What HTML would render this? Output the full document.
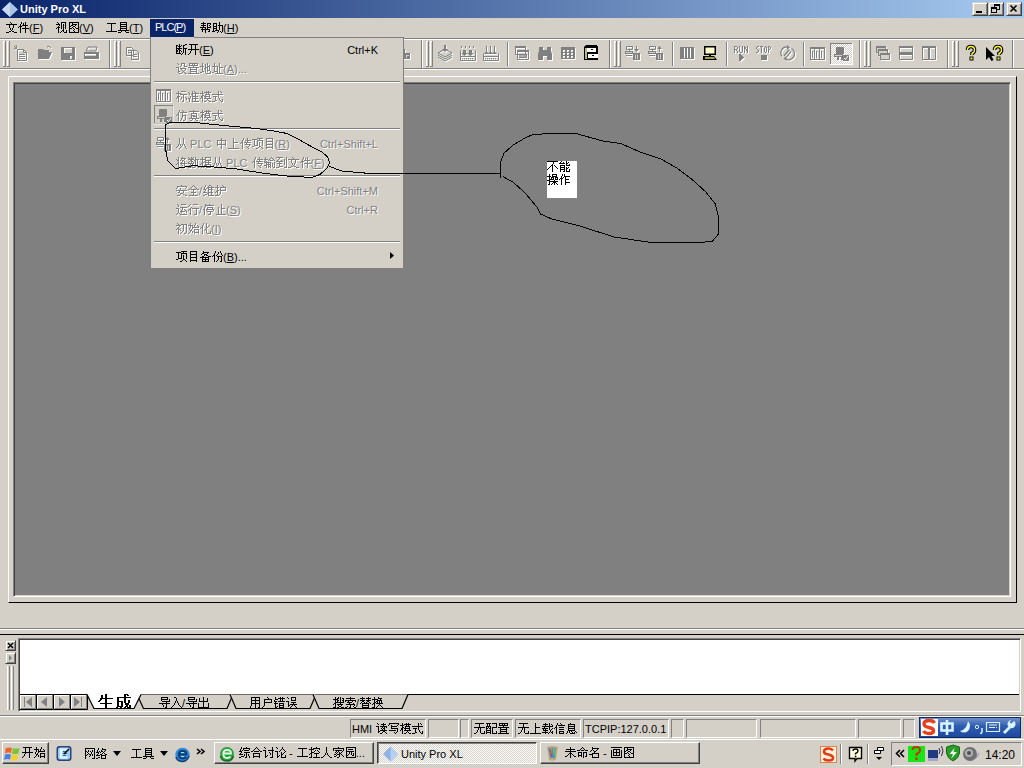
<!DOCTYPE html>
<html><head><meta charset="utf-8">
<style>
*{margin:0;padding:0;box-sizing:border-box}
html,body{width:1024px;height:768px;overflow:hidden;background:#d4d0c8;font-family:"Liberation Sans",sans-serif;font-size:11px;color:#000}
.a{position:absolute}
.t{position:absolute;white-space:nowrap;line-height:12px}
.cn{font-size:11px}
.dis{color:#808080;text-shadow:1px 1px 0 #fff}
.u{text-decoration:underline}
.raised{border-top:1px solid #fff;border-left:1px solid #fff;border-right:1px solid #404040;border-bottom:1px solid #404040;box-shadow:inset -1px -1px 0 #808080}
.raised2{border-top:1px solid #d4d0c8;border-left:1px solid #d4d0c8;border-right:1px solid #404040;border-bottom:1px solid #404040;box-shadow:inset 1px 1px 0 #fff,inset -1px -1px 0 #808080}
.sunk1{border-top:1px solid #808080;border-left:1px solid #808080;border-right:1px solid #fff;border-bottom:1px solid #fff}
.sunk2{border-top:1px solid #808080;border-left:1px solid #808080;border-right:1px solid #fff;border-bottom:1px solid #fff;box-shadow:inset 1px 1px 0 #404040,inset -1px -1px 0 #d4d0c8}
.grip{position:absolute;width:3px;border-left:1px solid #fff;border-right:1px solid #808080}
.sep{position:absolute;width:2px;border-left:1px solid #808080;border-right:1px solid #fff}
.hsep{position:absolute;height:2px;border-top:1px solid #808080;border-bottom:1px solid #fff}
.g{display:inline-block;width:12px;height:12px;vertical-align:-1px;overflow:visible}.gb{display:inline-block;width:17px;height:16px;vertical-align:-2px;overflow:visible}.dis .g{filter:drop-shadow(1px 1px 0 #fff)}</style></head><body><svg width="0" height="0" style="position:absolute"><defs><symbol id="G6587"><path fill="currentColor" d="M5 1h1v1h-1zM6 2h1v1h-1zM1 3h11v1h-11zM4 4h1v1h-1zM8 4h1v1h-1zM4 5h1v1h-1zM8 5h1v1h-1zM4 6h1v1h-1zM8 6h1v1h-1zM5 7h1v1h-1zM7 7h1v1h-1zM5 8h1v1h-1zM7 8h1v1h-1zM6 9h1v1h-1zM4 10h2v1h-2zM7 10h2v1h-2zM1 11h3v1h-3zM9 11h3v1h-3z"/></symbol><symbol id="G4ef6"><path fill="currentColor" d="M4 1h1v1h-1zM8 1h1v1h-1zM4 2h1v1h-1zM6 2h1v1h-1zM8 2h1v1h-1zM3 3h1v1h-1zM6 3h1v1h-1zM8 3h1v1h-1zM3 4h1v1h-1zM5 4h6v1h-6zM2 5h3v1h-3zM8 5h1v1h-1zM1 6h1v1h-1zM3 6h1v1h-1zM8 6h1v1h-1zM3 7h1v1h-1zM5 7h7v1h-7zM3 8h1v1h-1zM8 8h1v1h-1zM3 9h1v1h-1zM8 9h1v1h-1zM3 10h1v1h-1zM8 10h1v1h-1zM3 11h1v1h-1zM8 11h1v1h-1z"/></symbol><symbol id="G89c6"><path fill="currentColor" d="M2 1h1v1h-1zM6 1h5v1h-5zM3 2h1v1h-1zM6 2h1v1h-1zM10 2h1v1h-1zM1 3h4v1h-4zM6 3h1v1h-1zM8 3h1v1h-1zM10 3h1v1h-1zM4 4h1v1h-1zM6 4h1v1h-1zM8 4h1v1h-1zM10 4h1v1h-1zM3 5h1v1h-1zM6 5h1v1h-1zM8 5h1v1h-1zM10 5h1v1h-1zM2 6h3v1h-3zM6 6h1v1h-1zM8 6h1v1h-1zM10 6h1v1h-1zM1 7h1v1h-1zM3 7h1v1h-1zM6 7h1v1h-1zM8 7h1v1h-1zM10 7h1v1h-1zM3 8h1v1h-1zM8 8h1v1h-1zM3 9h1v1h-1zM7 9h2v1h-2zM11 9h1v1h-1zM3 10h1v1h-1zM6 10h1v1h-1zM8 10h1v1h-1zM11 10h1v1h-1zM3 11h1v1h-1zM5 11h1v1h-1zM9 11h3v1h-3z"/></symbol><symbol id="G56fe"><path fill="currentColor" d="M2 1h10v1h-10zM2 2h1v1h-1zM5 2h1v1h-1zM11 2h1v1h-1zM2 3h1v1h-1zM5 3h5v1h-5zM11 3h1v1h-1zM2 4h1v1h-1zM4 4h2v1h-2zM8 4h1v1h-1zM11 4h1v1h-1zM2 5h2v1h-2zM6 5h2v1h-2zM11 5h1v1h-1zM2 6h1v1h-1zM5 6h1v1h-1zM8 6h1v1h-1zM11 6h1v1h-1zM2 7h3v1h-3zM6 7h1v1h-1zM9 7h3v1h-3zM2 8h1v1h-1zM7 8h1v1h-1zM11 8h1v1h-1zM2 9h1v1h-1zM6 9h1v1h-1zM11 9h1v1h-1zM2 10h1v1h-1zM7 10h1v1h-1zM11 10h1v1h-1zM2 11h10v1h-10z"/></symbol><symbol id="G5de5"><path fill="currentColor" d="M2 2h9v1h-9zM6 3h1v1h-1zM6 4h1v1h-1zM6 5h1v1h-1zM6 6h1v1h-1zM6 7h1v1h-1zM6 8h1v1h-1zM6 9h1v1h-1zM1 10h11v1h-11z"/></symbol><symbol id="G5177"><path fill="currentColor" d="M3 1h7v1h-7zM3 2h1v1h-1zM9 2h1v1h-1zM3 3h7v1h-7zM3 4h1v1h-1zM9 4h1v1h-1zM3 5h7v1h-7zM3 6h1v1h-1zM9 6h1v1h-1zM3 7h7v1h-7zM3 8h1v1h-1zM9 8h1v1h-1zM1 9h11v1h-11zM4 10h1v1h-1zM8 10h1v1h-1zM1 11h3v1h-3zM9 11h3v1h-3z"/></symbol><symbol id="G5e2e"><path fill="currentColor" d="M4 1h1v1h-1zM2 2h5v1h-5zM8 2h4v1h-4zM4 3h1v1h-1zM8 3h1v1h-1zM11 3h1v1h-1zM2 4h5v1h-5zM8 4h1v1h-1zM10 4h1v1h-1zM4 5h1v1h-1zM8 5h1v1h-1zM11 5h1v1h-1zM1 6h6v1h-6zM8 6h4v1h-4zM3 7h1v1h-1zM6 7h1v1h-1zM8 7h1v1h-1zM2 8h9v1h-9zM3 9h1v1h-1zM6 9h1v1h-1zM10 9h1v1h-1zM3 10h1v1h-1zM6 10h1v1h-1zM9 10h2v1h-2zM6 11h1v1h-1z"/></symbol><symbol id="G52a9"><path fill="currentColor" d="M8 1h1v1h-1zM2 2h4v1h-4zM8 2h1v1h-1zM2 3h1v1h-1zM5 3h1v1h-1zM8 3h1v1h-1zM2 4h1v1h-1zM5 4h1v1h-1zM7 4h5v1h-5zM2 5h4v1h-4zM8 5h1v1h-1zM11 5h1v1h-1zM2 6h1v1h-1zM5 6h1v1h-1zM8 6h1v1h-1zM11 6h1v1h-1zM2 7h4v1h-4zM8 7h1v1h-1zM11 7h1v1h-1zM2 8h1v1h-1zM5 8h1v1h-1zM8 8h1v1h-1zM11 8h1v1h-1zM2 9h1v1h-1zM4 9h4v1h-4zM11 9h1v1h-1zM1 10h3v1h-3zM7 10h1v1h-1zM9 10h1v1h-1zM11 10h1v1h-1zM6 11h1v1h-1zM10 11h1v1h-1z"/></symbol><symbol id="G65ad"><path fill="currentColor" d="M4 1h1v1h-1zM10 1h2v1h-2zM1 2h2v1h-2zM4 2h1v1h-1zM6 2h1v1h-1zM8 2h2v1h-2zM1 3h1v1h-1zM3 3h3v1h-3zM8 3h1v1h-1zM1 4h1v1h-1zM4 4h1v1h-1zM8 4h1v1h-1zM1 5h6v1h-6zM8 5h4v1h-4zM1 6h1v1h-1zM3 6h2v1h-2zM8 6h1v1h-1zM10 6h1v1h-1zM1 7h2v1h-2zM4 7h2v1h-2zM8 7h1v1h-1zM10 7h1v1h-1zM1 8h2v1h-2zM4 8h1v1h-1zM6 8h1v1h-1zM8 8h1v1h-1zM10 8h1v1h-1zM1 9h1v1h-1zM4 9h1v1h-1zM8 9h1v1h-1zM10 9h1v1h-1zM1 10h5v1h-5zM7 10h1v1h-1zM10 10h1v1h-1zM6 11h1v1h-1zM10 11h1v1h-1z"/></symbol><symbol id="G5f00"><path fill="currentColor" d="M2 1h9v1h-9zM4 2h1v1h-1zM8 2h1v1h-1zM4 3h1v1h-1zM8 3h1v1h-1zM4 4h1v1h-1zM8 4h1v1h-1zM4 5h1v1h-1zM8 5h1v1h-1zM1 6h11v1h-11zM4 7h1v1h-1zM8 7h1v1h-1zM3 8h1v1h-1zM8 8h1v1h-1zM3 9h1v1h-1zM8 9h1v1h-1zM2 10h1v1h-1zM8 10h1v1h-1zM1 11h1v1h-1zM8 11h1v1h-1z"/></symbol><symbol id="G8bbe"><path fill="currentColor" d="M2 1h1v1h-1zM6 1h4v1h-4zM3 2h1v1h-1zM6 2h1v1h-1zM9 2h1v1h-1zM6 3h1v1h-1zM9 3h1v1h-1zM5 4h1v1h-1zM9 4h3v1h-3zM1 5h3v1h-3zM3 6h1v1h-1zM5 6h6v1h-6zM3 7h1v1h-1zM6 7h1v1h-1zM10 7h1v1h-1zM3 8h1v1h-1zM7 8h1v1h-1zM9 8h1v1h-1zM3 9h2v1h-2zM8 9h1v1h-1zM3 10h1v1h-1zM7 10h1v1h-1zM9 10h1v1h-1zM4 11h3v1h-3zM10 11h2v1h-2z"/></symbol><symbol id="G7f6e"><path fill="currentColor" d="M2 1h9v1h-9zM2 2h1v1h-1zM5 2h1v1h-1zM7 2h1v1h-1zM10 2h1v1h-1zM2 3h9v1h-9zM6 4h1v1h-1zM1 5h11v1h-11zM3 6h1v1h-1zM9 6h1v1h-1zM3 7h7v1h-7zM3 8h1v1h-1zM9 8h1v1h-1zM3 9h7v1h-7zM3 10h1v1h-1zM9 10h1v1h-1zM1 11h11v1h-11z"/></symbol><symbol id="G5730"><path fill="currentColor" d="M3 1h1v1h-1zM8 1h1v1h-1zM3 2h1v1h-1zM6 2h1v1h-1zM8 2h1v1h-1zM3 3h1v1h-1zM6 3h1v1h-1zM8 3h1v1h-1zM10 3h1v1h-1zM1 4h4v1h-4zM6 4h1v1h-1zM8 4h3v1h-3zM3 5h1v1h-1zM6 5h3v1h-3zM10 5h1v1h-1zM3 6h1v1h-1zM5 6h2v1h-2zM8 6h1v1h-1zM10 6h1v1h-1zM3 7h1v1h-1zM6 7h1v1h-1zM8 7h1v1h-1zM10 7h1v1h-1zM3 8h1v1h-1zM6 8h1v1h-1zM8 8h3v1h-3zM3 9h2v1h-2zM6 9h1v1h-1zM8 9h1v1h-1zM11 9h1v1h-1zM1 10h2v1h-2zM6 10h1v1h-1zM11 10h1v1h-1zM7 11h5v1h-5z"/></symbol><symbol id="G5740"><path fill="currentColor" d="M3 1h1v1h-1zM8 1h1v1h-1zM3 2h1v1h-1zM8 2h1v1h-1zM3 3h1v1h-1zM8 3h1v1h-1zM1 4h6v1h-6zM8 4h1v1h-1zM3 5h1v1h-1zM6 5h1v1h-1zM8 5h4v1h-4zM3 6h1v1h-1zM6 6h1v1h-1zM8 6h1v1h-1zM3 7h1v1h-1zM6 7h1v1h-1zM8 7h1v1h-1zM3 8h1v1h-1zM6 8h1v1h-1zM8 8h1v1h-1zM3 9h4v1h-4zM8 9h1v1h-1zM1 10h2v1h-2zM6 10h1v1h-1zM8 10h1v1h-1zM4 11h8v1h-8z"/></symbol><symbol id="G6807"><path fill="currentColor" d="M3 1h1v1h-1zM6 1h5v1h-5zM3 2h1v1h-1zM1 3h5v1h-5zM3 4h1v1h-1zM5 4h7v1h-7zM3 5h1v1h-1zM8 5h1v1h-1zM2 6h3v1h-3zM8 6h1v1h-1zM2 7h2v1h-2zM6 7h1v1h-1zM8 7h1v1h-1zM10 7h1v1h-1zM1 8h1v1h-1zM3 8h1v1h-1zM6 8h1v1h-1zM8 8h1v1h-1zM11 8h1v1h-1zM3 9h1v1h-1zM5 9h1v1h-1zM8 9h1v1h-1zM11 9h1v1h-1zM3 10h1v1h-1zM8 10h1v1h-1zM3 11h1v1h-1zM7 11h2v1h-2z"/></symbol><symbol id="G51c6"><path fill="currentColor" d="M5 1h1v1h-1zM7 1h1v1h-1zM1 2h1v1h-1zM5 2h1v1h-1zM8 2h1v1h-1zM2 3h1v1h-1zM5 3h7v1h-7zM2 4h1v1h-1zM4 4h2v1h-2zM8 4h1v1h-1zM5 5h1v1h-1zM8 5h1v1h-1zM3 6h1v1h-1zM5 6h6v1h-6zM3 7h1v1h-1zM5 7h1v1h-1zM8 7h1v1h-1zM1 8h2v1h-2zM5 8h6v1h-6zM2 9h1v1h-1zM5 9h1v1h-1zM8 9h1v1h-1zM2 10h1v1h-1zM5 10h1v1h-1zM8 10h1v1h-1zM2 11h1v1h-1zM5 11h7v1h-7z"/></symbol><symbol id="G6a21"><path fill="currentColor" d="M3 1h1v1h-1zM7 1h1v1h-1zM9 1h1v1h-1zM3 2h1v1h-1zM5 2h7v1h-7zM1 3h4v1h-4zM7 3h1v1h-1zM9 3h1v1h-1zM3 4h1v1h-1zM6 4h5v1h-5zM3 5h2v1h-2zM6 5h1v1h-1zM10 5h1v1h-1zM2 6h2v1h-2zM5 6h6v1h-6zM2 7h2v1h-2zM6 7h1v1h-1zM10 7h1v1h-1zM1 8h1v1h-1zM3 8h1v1h-1zM5 8h7v1h-7zM3 9h1v1h-1zM8 9h1v1h-1zM3 10h1v1h-1zM7 10h1v1h-1zM9 10h1v1h-1zM3 11h1v1h-1zM5 11h2v1h-2zM10 11h2v1h-2z"/></symbol><symbol id="G5f0f"><path fill="currentColor" d="M7 1h1v1h-1zM9 1h1v1h-1zM7 2h1v1h-1zM10 2h1v1h-1zM7 3h1v1h-1zM1 4h11v1h-11zM7 5h1v1h-1zM2 6h4v1h-4zM7 6h1v1h-1zM4 7h1v1h-1zM7 7h1v1h-1zM4 8h1v1h-1zM8 8h1v1h-1zM4 9h1v1h-1zM8 9h1v1h-1zM11 9h1v1h-1zM4 10h2v1h-2zM9 10h1v1h-1zM11 10h1v1h-1zM1 11h3v1h-3zM10 11h2v1h-2z"/></symbol><symbol id="G4eff"><path fill="currentColor" d="M4 1h1v1h-1zM7 1h1v1h-1zM4 2h1v1h-1zM8 2h1v1h-1zM3 3h1v1h-1zM5 3h7v1h-7zM3 4h1v1h-1zM7 4h1v1h-1zM2 5h2v1h-2zM7 5h1v1h-1zM1 6h1v1h-1zM3 6h1v1h-1zM7 6h4v1h-4zM3 7h1v1h-1zM7 7h1v1h-1zM10 7h1v1h-1zM3 8h1v1h-1zM7 8h1v1h-1zM10 8h1v1h-1zM3 9h1v1h-1zM6 9h1v1h-1zM10 9h1v1h-1zM3 10h1v1h-1zM6 10h1v1h-1zM10 10h1v1h-1zM3 11h1v1h-1zM5 11h1v1h-1zM8 11h2v1h-2z"/></symbol><symbol id="G771f"><path fill="currentColor" d="M6 1h1v1h-1zM2 2h10v1h-10zM6 3h1v1h-1zM4 4h6v1h-6zM4 5h1v1h-1zM9 5h1v1h-1zM4 6h4v1h-4zM9 6h1v1h-1zM4 7h1v1h-1zM6 7h4v1h-4zM4 8h1v1h-1zM9 8h1v1h-1zM2 9h10v1h-10zM5 10h1v1h-1zM8 10h1v1h-1zM3 11h2v1h-2zM9 11h2v1h-2z"/></symbol><symbol id="G4ece"><path fill="currentColor" d="M4 1h1v1h-1zM8 1h1v1h-1zM4 2h1v1h-1zM8 2h1v1h-1zM4 3h1v1h-1zM8 3h1v1h-1zM4 4h1v1h-1zM8 4h1v1h-1zM4 5h1v1h-1zM8 5h1v1h-1zM4 6h1v1h-1zM8 6h1v1h-1zM3 7h1v1h-1zM5 7h1v1h-1zM7 7h1v1h-1zM9 7h1v1h-1zM3 8h1v1h-1zM5 8h1v1h-1zM7 8h1v1h-1zM9 8h1v1h-1zM2 9h1v1h-1zM6 9h1v1h-1zM10 9h1v1h-1zM1 10h1v1h-1zM5 10h1v1h-1zM10 10h1v1h-1zM4 11h1v1h-1zM11 11h1v1h-1z"/></symbol><symbol id="G4e2d"><path fill="currentColor" d="M6 1h1v1h-1zM6 2h1v1h-1zM2 3h9v1h-9zM2 4h1v1h-1zM6 4h1v1h-1zM10 4h1v1h-1zM2 5h1v1h-1zM6 5h1v1h-1zM10 5h1v1h-1zM2 6h1v1h-1zM6 6h1v1h-1zM10 6h1v1h-1zM2 7h9v1h-9zM2 8h1v1h-1zM6 8h1v1h-1zM10 8h1v1h-1zM6 9h1v1h-1zM6 10h1v1h-1zM6 11h1v1h-1z"/></symbol><symbol id="G4e0a"><path fill="currentColor" d="M6 1h1v1h-1zM6 2h1v1h-1zM6 3h1v1h-1zM6 4h1v1h-1zM6 5h5v1h-5zM6 6h1v1h-1zM6 7h1v1h-1zM6 8h1v1h-1zM6 9h1v1h-1zM6 10h1v1h-1zM1 11h11v1h-11z"/></symbol><symbol id="G4f20"><path fill="currentColor" d="M4 1h1v1h-1zM8 1h1v1h-1zM4 2h1v1h-1zM8 2h1v1h-1zM3 3h1v1h-1zM6 3h6v1h-6zM3 4h1v1h-1zM8 4h1v1h-1zM2 5h2v1h-2zM5 5h7v1h-7zM1 6h1v1h-1zM3 6h1v1h-1zM7 6h1v1h-1zM3 7h1v1h-1zM6 7h6v1h-6zM3 8h1v1h-1zM10 8h1v1h-1zM3 9h1v1h-1zM7 9h1v1h-1zM9 9h1v1h-1zM3 10h1v1h-1zM8 10h1v1h-1zM3 11h1v1h-1zM9 11h1v1h-1z"/></symbol><symbol id="G9879"><path fill="currentColor" d="M6 1h6v1h-6zM1 2h5v1h-5zM8 2h1v1h-1zM3 3h1v1h-1zM6 3h6v1h-6zM3 4h1v1h-1zM6 4h1v1h-1zM11 4h1v1h-1zM3 5h1v1h-1zM6 5h1v1h-1zM8 5h1v1h-1zM11 5h1v1h-1zM3 6h1v1h-1zM6 6h1v1h-1zM8 6h1v1h-1zM11 6h1v1h-1zM3 7h1v1h-1zM6 7h1v1h-1zM8 7h1v1h-1zM11 7h1v1h-1zM3 8h4v1h-4zM8 8h1v1h-1zM11 8h1v1h-1zM1 9h2v1h-2zM8 9h2v1h-2zM7 10h1v1h-1zM10 10h1v1h-1zM5 11h2v1h-2zM11 11h1v1h-1z"/></symbol><symbol id="G76ee"><path fill="currentColor" d="M3 1h7v1h-7zM3 2h1v1h-1zM9 2h1v1h-1zM3 3h1v1h-1zM9 3h1v1h-1zM3 4h7v1h-7zM3 5h1v1h-1zM9 5h1v1h-1zM3 6h1v1h-1zM9 6h1v1h-1zM3 7h7v1h-7zM3 8h1v1h-1zM9 8h1v1h-1zM3 9h1v1h-1zM9 9h1v1h-1zM3 10h7v1h-7zM3 11h1v1h-1zM9 11h1v1h-1z"/></symbol><symbol id="G5c06"><path fill="currentColor" d="M3 1h1v1h-1zM7 1h1v1h-1zM3 2h1v1h-1zM6 2h5v1h-5zM1 3h1v1h-1zM3 3h1v1h-1zM6 3h1v1h-1zM9 3h1v1h-1zM2 4h2v1h-2zM5 4h1v1h-1zM7 4h2v1h-2zM3 5h1v1h-1zM7 5h1v1h-1zM9 5h1v1h-1zM3 6h1v1h-1zM6 6h1v1h-1zM9 6h1v1h-1zM2 7h2v1h-2zM5 7h7v1h-7zM1 8h1v1h-1zM3 8h1v1h-1zM6 8h1v1h-1zM9 8h1v1h-1zM3 9h1v1h-1zM7 9h1v1h-1zM9 9h1v1h-1zM3 10h1v1h-1zM9 10h1v1h-1zM3 11h1v1h-1zM8 11h2v1h-2z"/></symbol><symbol id="G6570"><path fill="currentColor" d="M1 1h1v1h-1zM4 1h1v1h-1zM6 1h1v1h-1zM8 1h1v1h-1zM2 2h1v1h-1zM4 2h2v1h-2zM8 2h1v1h-1zM1 3h6v1h-6zM8 3h4v1h-4zM3 4h2v1h-2zM7 4h2v1h-2zM10 4h1v1h-1zM2 5h1v1h-1zM4 5h2v1h-2zM8 5h1v1h-1zM10 5h1v1h-1zM1 6h1v1h-1zM4 6h1v1h-1zM6 6h1v1h-1zM8 6h1v1h-1zM10 6h1v1h-1zM1 7h6v1h-6zM8 7h1v1h-1zM10 7h1v1h-1zM3 8h1v1h-1zM5 8h1v1h-1zM8 8h1v1h-1zM10 8h1v1h-1zM2 9h2v1h-2zM5 9h1v1h-1zM9 9h1v1h-1zM4 10h1v1h-1zM8 10h1v1h-1zM10 10h1v1h-1zM1 11h3v1h-3zM5 11h3v1h-3zM11 11h1v1h-1z"/></symbol><symbol id="G636e"><path fill="currentColor" d="M3 1h1v1h-1zM6 1h6v1h-6zM3 2h1v1h-1zM6 2h1v1h-1zM11 2h1v1h-1zM1 3h6v1h-6zM11 3h1v1h-1zM3 4h1v1h-1zM6 4h6v1h-6zM3 5h1v1h-1zM5 5h2v1h-2zM9 5h1v1h-1zM3 6h2v1h-2zM6 6h6v1h-6zM2 7h2v1h-2zM6 7h1v1h-1zM9 7h1v1h-1zM1 8h1v1h-1zM3 8h1v1h-1zM6 8h6v1h-6zM3 9h1v1h-1zM5 9h3v1h-3zM11 9h1v1h-1zM1 10h1v1h-1zM3 10h1v1h-1zM5 10h1v1h-1zM7 10h1v1h-1zM11 10h1v1h-1zM2 11h1v1h-1zM4 11h1v1h-1zM7 11h5v1h-5z"/></symbol><symbol id="G8f93"><path fill="currentColor" d="M2 1h1v1h-1zM8 1h1v1h-1zM2 2h1v1h-1zM7 2h1v1h-1zM9 2h1v1h-1zM1 3h4v1h-4zM6 3h1v1h-1zM10 3h1v1h-1zM2 4h1v1h-1zM5 4h1v1h-1zM7 4h3v1h-3zM11 4h1v1h-1zM1 5h1v1h-1zM3 5h1v1h-1zM1 6h7v1h-7zM11 6h1v1h-1zM3 7h1v1h-1zM5 7h1v1h-1zM7 7h1v1h-1zM9 7h1v1h-1zM11 7h1v1h-1zM3 8h5v1h-5zM9 8h1v1h-1zM11 8h1v1h-1zM1 9h3v1h-3zM5 9h1v1h-1zM7 9h1v1h-1zM9 9h1v1h-1zM11 9h1v1h-1zM3 10h1v1h-1zM5 10h3v1h-3zM9 10h1v1h-1zM11 10h1v1h-1zM3 11h1v1h-1zM5 11h1v1h-1zM7 11h1v1h-1zM10 11h2v1h-2z"/></symbol><symbol id="G5230"><path fill="currentColor" d="M1 1h7v1h-7zM11 1h1v1h-1zM4 2h1v1h-1zM11 2h1v1h-1zM3 3h1v1h-1zM9 3h1v1h-1zM11 3h1v1h-1zM2 4h1v1h-1zM6 4h1v1h-1zM9 4h1v1h-1zM11 4h1v1h-1zM1 5h7v1h-7zM9 5h1v1h-1zM11 5h1v1h-1zM4 6h1v1h-1zM9 6h1v1h-1zM11 6h1v1h-1zM2 7h5v1h-5zM9 7h1v1h-1zM11 7h1v1h-1zM4 8h1v1h-1zM9 8h1v1h-1zM11 8h1v1h-1zM4 9h1v1h-1zM11 9h1v1h-1zM4 10h4v1h-4zM11 10h1v1h-1zM1 11h3v1h-3zM9 11h3v1h-3z"/></symbol><symbol id="G5b89"><path fill="currentColor" d="M6 1h1v1h-1zM2 2h10v1h-10zM2 3h1v1h-1zM11 3h1v1h-1zM1 4h1v1h-1zM5 4h1v1h-1zM10 4h1v1h-1zM5 5h1v1h-1zM1 6h11v1h-11zM4 7h1v1h-1zM8 7h1v1h-1zM3 8h2v1h-2zM8 8h1v1h-1zM5 9h3v1h-3zM5 10h1v1h-1zM8 10h2v1h-2zM2 11h3v1h-3zM10 11h2v1h-2z"/></symbol><symbol id="G5168"><path fill="currentColor" d="M6 1h1v1h-1zM5 2h1v1h-1zM7 2h1v1h-1zM4 3h1v1h-1zM8 3h1v1h-1zM3 4h1v1h-1zM9 4h1v1h-1zM1 5h2v1h-2zM4 5h5v1h-5zM10 5h2v1h-2zM6 6h1v1h-1zM6 7h1v1h-1zM4 8h5v1h-5zM6 9h1v1h-1zM6 10h1v1h-1zM2 11h9v1h-9z"/></symbol><symbol id="G7ef4"><path fill="currentColor" d="M3 1h1v1h-1zM7 1h2v1h-2zM3 2h1v1h-1zM6 2h1v1h-1zM9 2h1v1h-1zM2 3h1v1h-1zM5 3h7v1h-7zM2 4h1v1h-1zM4 4h1v1h-1zM6 4h1v1h-1zM9 4h1v1h-1zM1 5h3v1h-3zM6 5h5v1h-5zM3 6h1v1h-1zM6 6h1v1h-1zM9 6h1v1h-1zM2 7h1v1h-1zM6 7h1v1h-1zM9 7h1v1h-1zM1 8h4v1h-4zM6 8h5v1h-5zM5 9h2v1h-2zM9 9h1v1h-1zM3 10h2v1h-2zM6 10h1v1h-1zM9 10h1v1h-1zM1 11h2v1h-2zM6 11h6v1h-6z"/></symbol><symbol id="G62a4"><path fill="currentColor" d="M3 1h1v1h-1zM8 1h1v1h-1zM3 2h1v1h-1zM9 2h1v1h-1zM1 3h4v1h-4zM6 3h6v1h-6zM3 4h1v1h-1zM6 4h1v1h-1zM11 4h1v1h-1zM3 5h1v1h-1zM6 5h1v1h-1zM11 5h1v1h-1zM3 6h2v1h-2zM6 6h6v1h-6zM2 7h2v1h-2zM6 7h1v1h-1zM1 8h1v1h-1zM3 8h1v1h-1zM6 8h1v1h-1zM3 9h1v1h-1zM6 9h1v1h-1zM3 10h1v1h-1zM5 10h1v1h-1zM1 11h4v1h-4z"/></symbol><symbol id="G8fd0"><path fill="currentColor" d="M2 1h1v1h-1zM6 1h5v1h-5zM3 2h1v1h-1zM3 3h1v1h-1zM5 4h7v1h-7zM1 5h3v1h-3zM7 5h1v1h-1zM3 6h1v1h-1zM7 6h1v1h-1zM9 6h1v1h-1zM3 7h1v1h-1zM6 7h1v1h-1zM10 7h1v1h-1zM3 8h1v1h-1zM5 8h5v1h-5zM11 8h1v1h-1zM3 9h1v1h-1zM6 9h1v1h-1zM11 9h1v1h-1zM2 10h1v1h-1zM4 10h1v1h-1zM1 11h1v1h-1zM5 11h7v1h-7z"/></symbol><symbol id="G884c"><path fill="currentColor" d="M3 1h1v1h-1zM6 1h5v1h-5zM2 2h1v1h-1zM1 3h1v1h-1zM4 4h1v1h-1zM3 5h1v1h-1zM5 5h7v1h-7zM2 6h2v1h-2zM9 6h1v1h-1zM1 7h1v1h-1zM3 7h1v1h-1zM9 7h1v1h-1zM3 8h1v1h-1zM9 8h1v1h-1zM3 9h1v1h-1zM9 9h1v1h-1zM3 10h1v1h-1zM9 10h1v1h-1zM3 11h1v1h-1zM7 11h3v1h-3z"/></symbol><symbol id="G505c"><path fill="currentColor" d="M3 1h1v1h-1zM7 1h1v1h-1zM3 2h9v1h-9zM3 3h1v1h-1zM2 4h1v1h-1zM5 4h6v1h-6zM2 5h1v1h-1zM5 5h1v1h-1zM10 5h1v1h-1zM1 6h2v1h-2zM4 6h8v1h-8zM2 7h1v1h-1zM4 7h1v1h-1zM11 7h1v1h-1zM2 8h1v1h-1zM5 8h6v1h-6zM2 9h1v1h-1zM8 9h1v1h-1zM2 10h1v1h-1zM8 10h1v1h-1zM2 11h1v1h-1zM6 11h3v1h-3z"/></symbol><symbol id="G6b62"><path fill="currentColor" d="M7 1h1v1h-1zM7 2h1v1h-1zM7 3h1v1h-1zM4 4h1v1h-1zM7 4h1v1h-1zM4 5h1v1h-1zM7 5h4v1h-4zM4 6h1v1h-1zM7 6h1v1h-1zM4 7h1v1h-1zM7 7h1v1h-1zM4 8h1v1h-1zM7 8h1v1h-1zM4 9h1v1h-1zM7 9h1v1h-1zM4 10h1v1h-1zM7 10h1v1h-1zM2 11h10v1h-10z"/></symbol><symbol id="G521d"><path fill="currentColor" d="M2 1h1v1h-1zM3 2h1v1h-1zM6 2h6v1h-6zM1 3h5v1h-5zM8 3h1v1h-1zM11 3h1v1h-1zM4 4h1v1h-1zM8 4h1v1h-1zM11 4h1v1h-1zM3 5h1v1h-1zM8 5h1v1h-1zM11 5h1v1h-1zM2 6h2v1h-2zM5 6h1v1h-1zM8 6h1v1h-1zM11 6h1v1h-1zM1 7h1v1h-1zM3 7h2v1h-2zM8 7h1v1h-1zM11 7h1v1h-1zM3 8h1v1h-1zM5 8h1v1h-1zM8 8h1v1h-1zM11 8h1v1h-1zM3 9h1v1h-1zM7 9h1v1h-1zM11 9h1v1h-1zM3 10h1v1h-1zM6 10h1v1h-1zM11 10h1v1h-1zM3 11h1v1h-1zM5 11h1v1h-1zM9 11h2v1h-2z"/></symbol><symbol id="G59cb"><path fill="currentColor" d="M3 1h1v1h-1zM8 1h1v1h-1zM3 2h1v1h-1zM8 2h1v1h-1zM1 3h5v1h-5zM7 3h1v1h-1zM10 3h1v1h-1zM3 4h1v1h-1zM5 4h1v1h-1zM7 4h1v1h-1zM11 4h1v1h-1zM3 5h1v1h-1zM5 5h7v1h-7zM2 6h1v1h-1zM5 6h1v1h-1zM2 7h1v1h-1zM4 7h1v1h-1zM7 7h5v1h-5zM3 8h2v1h-2zM7 8h1v1h-1zM11 8h1v1h-1zM3 9h1v1h-1zM5 9h1v1h-1zM7 9h1v1h-1zM11 9h1v1h-1zM2 10h1v1h-1zM5 10h1v1h-1zM7 10h5v1h-5zM1 11h1v1h-1zM7 11h1v1h-1zM11 11h1v1h-1z"/></symbol><symbol id="G5316"><path fill="currentColor" d="M4 1h1v1h-1zM7 1h1v1h-1zM4 2h1v1h-1zM7 2h1v1h-1zM3 3h1v1h-1zM7 3h1v1h-1zM10 3h1v1h-1zM3 4h1v1h-1zM7 4h1v1h-1zM9 4h1v1h-1zM2 5h2v1h-2zM7 5h2v1h-2zM1 6h1v1h-1zM3 6h1v1h-1zM7 6h1v1h-1zM3 7h1v1h-1zM6 7h2v1h-2zM3 8h1v1h-1zM5 8h1v1h-1zM7 8h1v1h-1zM3 9h1v1h-1zM7 9h1v1h-1zM11 9h1v1h-1zM3 10h1v1h-1zM7 10h1v1h-1zM11 10h1v1h-1zM3 11h1v1h-1zM8 11h4v1h-4z"/></symbol><symbol id="G5907"><path fill="currentColor" d="M4 1h1v1h-1zM4 2h6v1h-6zM3 3h2v1h-2zM8 3h1v1h-1zM2 4h1v1h-1zM5 4h3v1h-3zM5 5h1v1h-1zM7 5h2v1h-2zM3 6h2v1h-2zM9 6h3v1h-3zM1 7h9v1h-9zM3 8h1v1h-1zM6 8h1v1h-1zM9 8h1v1h-1zM3 9h7v1h-7zM3 10h1v1h-1zM6 10h1v1h-1zM9 10h1v1h-1zM3 11h7v1h-7z"/></symbol><symbol id="G4efd"><path fill="currentColor" d="M4 1h1v1h-1zM9 1h1v1h-1zM4 2h1v1h-1zM7 2h1v1h-1zM9 2h1v1h-1zM3 3h1v1h-1zM7 3h1v1h-1zM10 3h1v1h-1zM3 4h1v1h-1zM6 4h1v1h-1zM10 4h1v1h-1zM2 5h2v1h-2zM5 5h1v1h-1zM11 5h1v1h-1zM1 6h1v1h-1zM3 6h1v1h-1zM6 6h5v1h-5zM3 7h1v1h-1zM7 7h1v1h-1zM10 7h1v1h-1zM3 8h1v1h-1zM7 8h1v1h-1zM10 8h1v1h-1zM3 9h1v1h-1zM7 9h1v1h-1zM10 9h1v1h-1zM3 10h1v1h-1zM6 10h1v1h-1zM10 10h1v1h-1zM3 11h1v1h-1zM5 11h1v1h-1zM9 11h2v1h-2z"/></symbol><symbol id="G4e0d"><path fill="currentColor" d="M1 1h11v1h-11zM7 2h1v1h-1zM7 3h1v1h-1zM6 4h1v1h-1zM5 5h2v1h-2zM8 5h1v1h-1zM4 6h1v1h-1zM6 6h1v1h-1zM9 6h1v1h-1zM3 7h1v1h-1zM6 7h1v1h-1zM10 7h1v1h-1zM2 8h1v1h-1zM6 8h1v1h-1zM11 8h1v1h-1zM1 9h1v1h-1zM6 9h1v1h-1zM6 10h1v1h-1zM6 11h1v1h-1z"/></symbol><symbol id="G80fd"><path fill="currentColor" d="M3 1h1v1h-1zM8 1h1v1h-1zM2 2h1v1h-1zM5 2h1v1h-1zM8 2h1v1h-1zM10 2h1v1h-1zM1 3h6v1h-6zM8 3h2v1h-2zM8 4h1v1h-1zM11 4h1v1h-1zM2 5h5v1h-5zM8 5h4v1h-4zM2 6h1v1h-1zM6 6h1v1h-1zM2 7h5v1h-5zM8 7h1v1h-1zM10 7h1v1h-1zM2 8h1v1h-1zM6 8h1v1h-1zM8 8h2v1h-2zM2 9h5v1h-5zM8 9h1v1h-1zM11 9h1v1h-1zM2 10h1v1h-1zM6 10h1v1h-1zM8 10h1v1h-1zM11 10h1v1h-1zM2 11h1v1h-1zM5 11h2v1h-2zM8 11h4v1h-4z"/></symbol><symbol id="G64cd"><path fill="currentColor" d="M3 1h1v1h-1zM6 1h5v1h-5zM3 2h1v1h-1zM6 2h1v1h-1zM10 2h1v1h-1zM1 3h4v1h-4zM6 3h5v1h-5zM3 4h1v1h-1zM5 4h3v1h-3zM9 4h3v1h-3zM3 5h1v1h-1zM5 5h1v1h-1zM7 5h1v1h-1zM9 5h1v1h-1zM11 5h1v1h-1zM3 6h5v1h-5zM9 6h3v1h-3zM1 7h3v1h-3zM8 7h1v1h-1zM3 8h9v1h-9zM3 9h1v1h-1zM7 9h3v1h-3zM3 10h1v1h-1zM6 10h1v1h-1zM8 10h1v1h-1zM10 10h1v1h-1zM2 11h2v1h-2zM5 11h1v1h-1zM8 11h1v1h-1zM11 11h1v1h-1z"/></symbol><symbol id="G4f5c"><path fill="currentColor" d="M4 1h1v1h-1zM6 1h1v1h-1zM4 2h1v1h-1zM6 2h1v1h-1zM3 3h1v1h-1zM6 3h6v1h-6zM3 4h1v1h-1zM5 4h1v1h-1zM7 4h1v1h-1zM2 5h3v1h-3zM7 5h1v1h-1zM1 6h1v1h-1zM3 6h1v1h-1zM7 6h4v1h-4zM3 7h1v1h-1zM7 7h1v1h-1zM3 8h1v1h-1zM7 8h1v1h-1zM3 9h1v1h-1zM7 9h5v1h-5zM3 10h1v1h-1zM7 10h1v1h-1zM3 11h1v1h-1zM7 11h1v1h-1z"/></symbol><symbol id="G5bfc"><path fill="currentColor" d="M3 1h7v1h-7zM3 2h1v1h-1zM9 2h1v1h-1zM3 3h7v1h-7zM11 3h1v1h-1zM3 4h1v1h-1zM11 4h1v1h-1zM4 5h8v1h-8zM8 6h1v1h-1zM1 7h11v1h-11zM4 8h1v1h-1zM8 8h1v1h-1zM5 9h1v1h-1zM8 9h1v1h-1zM5 10h1v1h-1zM8 10h1v1h-1zM7 11h2v1h-2z"/></symbol><symbol id="G5165"><path fill="currentColor" d="M4 1h2v1h-2zM6 2h1v1h-1zM6 3h1v1h-1zM6 4h1v1h-1zM5 5h1v1h-1zM7 5h1v1h-1zM5 6h1v1h-1zM7 6h1v1h-1zM4 7h1v1h-1zM8 7h1v1h-1zM4 8h1v1h-1zM8 8h1v1h-1zM3 9h1v1h-1zM9 9h1v1h-1zM2 10h1v1h-1zM10 10h1v1h-1zM1 11h1v1h-1zM11 11h1v1h-1z"/></symbol><symbol id="G51fa"><path fill="currentColor" d="M6 1h1v1h-1zM2 2h1v1h-1zM6 2h1v1h-1zM10 2h1v1h-1zM2 3h1v1h-1zM6 3h1v1h-1zM10 3h1v1h-1zM2 4h1v1h-1zM6 4h1v1h-1zM10 4h1v1h-1zM2 5h9v1h-9zM6 6h1v1h-1zM1 7h1v1h-1zM6 7h1v1h-1zM11 7h1v1h-1zM1 8h1v1h-1zM6 8h1v1h-1zM11 8h1v1h-1zM1 9h1v1h-1zM6 9h1v1h-1zM11 9h1v1h-1zM1 10h1v1h-1zM6 10h1v1h-1zM11 10h1v1h-1zM1 11h11v1h-11z"/></symbol><symbol id="G7528"><path fill="currentColor" d="M2 1h9v1h-9zM2 2h1v1h-1zM6 2h1v1h-1zM10 2h1v1h-1zM2 3h1v1h-1zM6 3h1v1h-1zM10 3h1v1h-1zM2 4h9v1h-9zM2 5h1v1h-1zM6 5h1v1h-1zM10 5h1v1h-1zM2 6h1v1h-1zM6 6h1v1h-1zM10 6h1v1h-1zM2 7h9v1h-9zM2 8h1v1h-1zM6 8h1v1h-1zM10 8h1v1h-1zM2 9h1v1h-1zM6 9h1v1h-1zM10 9h1v1h-1zM1 10h1v1h-1zM6 10h1v1h-1zM10 10h1v1h-1zM1 11h1v1h-1zM6 11h1v1h-1zM9 11h2v1h-2z"/></symbol><symbol id="G6237"><path fill="currentColor" d="M6 1h1v1h-1zM7 2h1v1h-1zM3 3h8v1h-8zM3 4h1v1h-1zM10 4h1v1h-1zM3 5h1v1h-1zM10 5h1v1h-1zM3 6h8v1h-8zM3 7h1v1h-1zM3 8h1v1h-1zM3 9h1v1h-1zM2 10h1v1h-1zM1 11h1v1h-1z"/></symbol><symbol id="G9519"><path fill="currentColor" d="M2 1h1v1h-1zM7 1h1v1h-1zM9 1h1v1h-1zM2 2h1v1h-1zM5 2h7v1h-7zM2 3h3v1h-3zM7 3h1v1h-1zM9 3h1v1h-1zM1 4h1v1h-1zM7 4h1v1h-1zM9 4h1v1h-1zM1 5h3v1h-3zM5 5h7v1h-7zM2 6h1v1h-1zM1 7h4v1h-4zM6 7h5v1h-5zM2 8h1v1h-1zM6 8h1v1h-1zM10 8h1v1h-1zM2 9h1v1h-1zM6 9h5v1h-5zM2 10h1v1h-1zM4 10h1v1h-1zM6 10h1v1h-1zM10 10h1v1h-1zM2 11h2v1h-2zM6 11h5v1h-5z"/></symbol><symbol id="G8bef"><path fill="currentColor" d="M2 1h1v1h-1zM6 1h5v1h-5zM3 2h1v1h-1zM6 2h1v1h-1zM10 2h1v1h-1zM6 3h1v1h-1zM10 3h1v1h-1zM6 4h5v1h-5zM1 5h3v1h-3zM3 6h1v1h-1zM6 6h5v1h-5zM3 7h1v1h-1zM8 7h1v1h-1zM3 8h1v1h-1zM5 8h7v1h-7zM3 9h2v1h-2zM7 9h1v1h-1zM9 9h1v1h-1zM3 10h1v1h-1zM6 10h1v1h-1zM10 10h1v1h-1zM5 11h1v1h-1zM11 11h1v1h-1z"/></symbol><symbol id="G641c"><path fill="currentColor" d="M3 1h1v1h-1zM6 1h1v1h-1zM8 1h1v1h-1zM3 2h1v1h-1zM5 2h2v1h-2zM8 2h1v1h-1zM10 2h2v1h-2zM1 3h5v1h-5zM8 3h1v1h-1zM11 3h1v1h-1zM3 4h1v1h-1zM5 4h2v1h-2zM8 4h1v1h-1zM10 4h2v1h-2zM3 5h1v1h-1zM5 5h1v1h-1zM8 5h1v1h-1zM11 5h1v1h-1zM3 6h9v1h-9zM2 7h2v1h-2zM8 7h1v1h-1zM1 8h1v1h-1zM3 8h1v1h-1zM5 8h6v1h-6zM3 9h1v1h-1zM6 9h1v1h-1zM9 9h1v1h-1zM3 10h1v1h-1zM7 10h2v1h-2zM1 11h3v1h-3zM5 11h2v1h-2zM9 11h3v1h-3z"/></symbol><symbol id="G7d22"><path fill="currentColor" d="M6 1h1v1h-1zM2 2h9v1h-9zM6 3h1v1h-1zM1 4h11v1h-11zM1 5h1v1h-1zM4 5h1v1h-1zM8 5h1v1h-1zM11 5h1v1h-1zM3 6h5v1h-5zM5 7h1v1h-1zM9 7h1v1h-1zM2 8h9v1h-9zM6 9h1v1h-1zM10 9h1v1h-1zM3 10h1v1h-1zM6 10h1v1h-1zM9 10h1v1h-1zM1 11h2v1h-2zM5 11h2v1h-2zM10 11h2v1h-2z"/></symbol><symbol id="G66ff"><path fill="currentColor" d="M3 1h1v1h-1zM9 1h1v1h-1zM1 2h5v1h-5zM7 2h5v1h-5zM3 3h1v1h-1zM9 3h1v1h-1zM1 4h5v1h-5zM7 4h5v1h-5zM3 5h2v1h-2zM8 5h2v1h-2zM2 6h1v1h-1zM5 6h1v1h-1zM7 6h1v1h-1zM10 6h1v1h-1zM1 7h1v1h-1zM3 7h7v1h-7zM11 7h1v1h-1zM3 8h1v1h-1zM9 8h1v1h-1zM3 9h7v1h-7zM3 10h1v1h-1zM9 10h1v1h-1zM3 11h7v1h-7z"/></symbol><symbol id="G6362"><path fill="currentColor" d="M3 1h1v1h-1zM7 1h1v1h-1zM3 2h1v1h-1zM7 2h4v1h-4zM1 3h6v1h-6zM9 3h1v1h-1zM3 4h1v1h-1zM6 4h5v1h-5zM3 5h1v1h-1zM5 5h2v1h-2zM8 5h1v1h-1zM10 5h1v1h-1zM3 6h2v1h-2zM6 6h1v1h-1zM8 6h1v1h-1zM10 6h1v1h-1zM2 7h2v1h-2zM5 7h7v1h-7zM1 8h1v1h-1zM3 8h1v1h-1zM8 8h1v1h-1zM3 9h1v1h-1zM7 9h1v1h-1zM9 9h1v1h-1zM3 10h1v1h-1zM6 10h1v1h-1zM10 10h1v1h-1zM1 11h3v1h-3zM5 11h1v1h-1zM11 11h1v1h-1z"/></symbol><symbol id="G8bfb"><path fill="currentColor" d="M2 1h1v1h-1zM8 1h1v1h-1zM3 2h1v1h-1zM6 2h5v1h-5zM8 3h1v1h-1zM1 4h3v1h-3zM5 4h7v1h-7zM3 5h1v1h-1zM7 5h1v1h-1zM9 5h1v1h-1zM11 5h1v1h-1zM3 6h1v1h-1zM6 6h1v1h-1zM8 6h2v1h-2zM3 7h1v1h-1zM7 7h1v1h-1zM9 7h1v1h-1zM3 8h1v1h-1zM5 8h7v1h-7zM3 9h2v1h-2zM8 9h2v1h-2zM3 10h1v1h-1zM7 10h1v1h-1zM10 10h1v1h-1zM5 11h2v1h-2zM11 11h1v1h-1z"/></symbol><symbol id="G5199"><path fill="currentColor" d="M2 1h10v1h-10zM2 2h1v1h-1zM11 2h1v1h-1zM1 3h1v1h-1zM4 3h1v1h-1zM10 3h1v1h-1zM4 4h6v1h-6zM4 5h1v1h-1zM4 6h7v1h-7zM10 7h1v1h-1zM2 8h7v1h-7zM10 8h1v1h-1zM10 9h1v1h-1zM7 10h1v1h-1zM9 10h1v1h-1zM8 11h1v1h-1z"/></symbol><symbol id="G65e0"><path fill="currentColor" d="M2 1h9v1h-9zM6 2h1v1h-1zM6 3h1v1h-1zM6 4h1v1h-1zM1 5h11v1h-11zM5 6h1v1h-1zM7 6h1v1h-1zM5 7h1v1h-1zM7 7h1v1h-1zM4 8h1v1h-1zM7 8h1v1h-1zM4 9h1v1h-1zM7 9h1v1h-1zM11 9h1v1h-1zM3 10h1v1h-1zM7 10h1v1h-1zM11 10h1v1h-1zM1 11h2v1h-2zM8 11h4v1h-4z"/></symbol><symbol id="G914d"><path fill="currentColor" d="M1 1h5v1h-5zM7 1h5v1h-5zM2 2h1v1h-1zM4 2h1v1h-1zM11 2h1v1h-1zM2 3h1v1h-1zM4 3h1v1h-1zM11 3h1v1h-1zM1 4h5v1h-5zM11 4h1v1h-1zM1 5h1v1h-1zM3 5h1v1h-1zM5 5h1v1h-1zM7 5h5v1h-5zM1 6h2v1h-2zM4 6h2v1h-2zM7 6h1v1h-1zM1 7h1v1h-1zM5 7h1v1h-1zM7 7h1v1h-1zM1 8h5v1h-5zM7 8h1v1h-1zM1 9h1v1h-1zM5 9h1v1h-1zM7 9h1v1h-1zM11 9h1v1h-1zM1 10h5v1h-5zM7 10h1v1h-1zM11 10h1v1h-1zM1 11h1v1h-1zM5 11h1v1h-1zM7 11h5v1h-5z"/></symbol><symbol id="G8f7d"><path fill="currentColor" d="M4 1h1v1h-1zM8 1h1v1h-1zM2 2h5v1h-5zM8 2h1v1h-1zM10 2h1v1h-1zM4 3h1v1h-1zM8 3h1v1h-1zM11 3h1v1h-1zM1 4h11v1h-11zM3 5h1v1h-1zM8 5h1v1h-1zM1 6h6v1h-6zM8 6h1v1h-1zM11 6h1v1h-1zM2 7h1v1h-1zM4 7h1v1h-1zM8 7h1v1h-1zM10 7h1v1h-1zM2 8h5v1h-5zM9 8h1v1h-1zM4 9h1v1h-1zM9 9h1v1h-1zM11 9h1v1h-1zM1 10h6v1h-6zM8 10h1v1h-1zM10 10h2v1h-2zM4 11h1v1h-1zM7 11h1v1h-1zM11 11h1v1h-1z"/></symbol><symbol id="G4fe1"><path fill="currentColor" d="M4 1h1v1h-1zM7 1h1v1h-1zM4 2h1v1h-1zM8 2h1v1h-1zM3 3h1v1h-1zM5 3h7v1h-7zM3 4h1v1h-1zM2 5h2v1h-2zM6 5h5v1h-5zM1 6h1v1h-1zM3 6h1v1h-1zM3 7h1v1h-1zM6 7h5v1h-5zM3 8h1v1h-1zM3 9h1v1h-1zM6 9h5v1h-5zM3 10h1v1h-1zM6 10h1v1h-1zM10 10h1v1h-1zM3 11h1v1h-1zM6 11h5v1h-5z"/></symbol><symbol id="G606f"><path fill="currentColor" d="M5 1h1v1h-1zM3 2h7v1h-7zM3 3h1v1h-1zM9 3h1v1h-1zM3 4h7v1h-7zM3 5h1v1h-1zM9 5h1v1h-1zM3 6h7v1h-7zM3 7h1v1h-1zM9 7h1v1h-1zM3 8h7v1h-7zM2 9h1v1h-1zM4 9h1v1h-1zM6 9h1v1h-1zM10 9h1v1h-1zM2 10h1v1h-1zM4 10h1v1h-1zM7 10h1v1h-1zM9 10h1v1h-1zM11 10h1v1h-1zM1 11h1v1h-1zM5 11h5v1h-5z"/></symbol><symbol id="G7f51"><path fill="currentColor" d="M2 1h10v1h-10zM2 2h1v1h-1zM11 2h1v1h-1zM2 3h1v1h-1zM5 3h1v1h-1zM9 3h1v1h-1zM11 3h1v1h-1zM2 4h2v1h-2zM5 4h1v1h-1zM7 4h1v1h-1zM9 4h1v1h-1zM11 4h1v1h-1zM2 5h1v1h-1zM4 5h1v1h-1zM8 5h1v1h-1zM11 5h1v1h-1zM2 6h1v1h-1zM5 6h1v1h-1zM8 6h1v1h-1zM11 6h1v1h-1zM2 7h1v1h-1zM4 7h1v1h-1zM6 7h2v1h-2zM9 7h1v1h-1zM11 7h1v1h-1zM2 8h2v1h-2zM7 8h1v1h-1zM9 8h1v1h-1zM11 8h1v1h-1zM2 9h1v1h-1zM6 9h1v1h-1zM11 9h1v1h-1zM2 10h1v1h-1zM11 10h1v1h-1zM2 11h1v1h-1zM9 11h3v1h-3z"/></symbol><symbol id="G7edc"><path fill="currentColor" d="M3 1h1v1h-1zM7 1h1v1h-1zM3 2h1v1h-1zM7 2h4v1h-4zM2 3h1v1h-1zM6 3h1v1h-1zM10 3h1v1h-1zM2 4h1v1h-1zM4 4h1v1h-1zM6 4h2v1h-2zM9 4h1v1h-1zM1 5h3v1h-3zM5 5h1v1h-1zM8 5h1v1h-1zM3 6h1v1h-1zM7 6h1v1h-1zM9 6h1v1h-1zM2 7h1v1h-1zM5 7h2v1h-2zM10 7h2v1h-2zM1 8h4v1h-4zM6 8h5v1h-5zM6 9h1v1h-1zM10 9h1v1h-1zM3 10h2v1h-2zM6 10h1v1h-1zM10 10h1v1h-1zM1 11h2v1h-2zM6 11h5v1h-5z"/></symbol><symbol id="G7efc"><path fill="currentColor" d="M3 1h1v1h-1zM8 1h1v1h-1zM3 2h1v1h-1zM5 2h7v1h-7zM2 3h1v1h-1zM5 3h1v1h-1zM11 3h1v1h-1zM2 4h1v1h-1zM4 4h1v1h-1zM6 4h5v1h-5zM1 5h3v1h-3zM3 6h1v1h-1zM6 6h6v1h-6zM2 7h1v1h-1zM8 7h1v1h-1zM1 8h4v1h-4zM6 8h1v1h-1zM8 8h1v1h-1zM10 8h1v1h-1zM6 9h1v1h-1zM8 9h1v1h-1zM10 9h1v1h-1zM3 10h3v1h-3zM8 10h1v1h-1zM11 10h1v1h-1zM1 11h2v1h-2zM7 11h2v1h-2zM11 11h1v1h-1z"/></symbol><symbol id="G5408"><path fill="currentColor" d="M6 1h1v1h-1zM5 2h1v1h-1zM7 2h1v1h-1zM4 3h1v1h-1zM8 3h1v1h-1zM3 4h1v1h-1zM9 4h1v1h-1zM1 5h2v1h-2zM4 5h5v1h-5zM10 5h2v1h-2zM3 7h7v1h-7zM3 8h1v1h-1zM9 8h1v1h-1zM3 9h1v1h-1zM9 9h1v1h-1zM3 10h7v1h-7zM3 11h1v1h-1zM9 11h1v1h-1z"/></symbol><symbol id="G8ba8"><path fill="currentColor" d="M2 1h1v1h-1zM10 1h1v1h-1zM3 2h1v1h-1zM10 2h1v1h-1zM10 3h1v1h-1zM1 4h3v1h-3zM6 4h6v1h-6zM3 5h1v1h-1zM10 5h1v1h-1zM3 6h1v1h-1zM7 6h1v1h-1zM10 6h1v1h-1zM3 7h1v1h-1zM8 7h1v1h-1zM10 7h1v1h-1zM3 8h1v1h-1zM8 8h1v1h-1zM10 8h1v1h-1zM3 9h1v1h-1zM5 9h1v1h-1zM10 9h1v1h-1zM3 10h2v1h-2zM10 10h1v1h-1zM3 11h1v1h-1zM8 11h3v1h-3z"/></symbol><symbol id="G8bba"><path fill="currentColor" d="M2 1h1v1h-1zM8 1h1v1h-1zM3 2h1v1h-1zM8 2h1v1h-1zM7 3h1v1h-1zM9 3h1v1h-1zM6 4h1v1h-1zM10 4h1v1h-1zM1 5h3v1h-3zM5 5h1v1h-1zM11 5h1v1h-1zM3 6h1v1h-1zM7 6h1v1h-1zM10 6h1v1h-1zM3 7h1v1h-1zM7 7h1v1h-1zM9 7h1v1h-1zM3 8h1v1h-1zM7 8h2v1h-2zM3 9h1v1h-1zM5 9h1v1h-1zM7 9h1v1h-1zM11 9h1v1h-1zM3 10h2v1h-2zM7 10h1v1h-1zM11 10h1v1h-1zM3 11h1v1h-1zM7 11h5v1h-5z"/></symbol><symbol id="G63a7"><path fill="currentColor" d="M3 1h1v1h-1zM8 1h1v1h-1zM3 2h1v1h-1zM5 2h7v1h-7zM1 3h5v1h-5zM11 3h1v1h-1zM3 4h1v1h-1zM7 4h1v1h-1zM9 4h1v1h-1zM3 5h1v1h-1zM6 5h1v1h-1zM10 5h1v1h-1zM3 6h3v1h-3zM11 6h1v1h-1zM2 7h2v1h-2zM6 7h5v1h-5zM1 8h1v1h-1zM3 8h1v1h-1zM8 8h1v1h-1zM3 9h1v1h-1zM8 9h1v1h-1zM3 10h1v1h-1zM8 10h1v1h-1zM1 11h3v1h-3zM5 11h7v1h-7z"/></symbol><symbol id="G4eba"><path fill="currentColor" d="M6 1h1v1h-1zM6 2h1v1h-1zM6 3h1v1h-1zM6 4h1v1h-1zM6 5h1v1h-1zM6 6h1v1h-1zM5 7h1v1h-1zM7 7h1v1h-1zM5 8h1v1h-1zM7 8h1v1h-1zM4 9h1v1h-1zM8 9h1v1h-1zM3 10h1v1h-1zM9 10h1v1h-1zM1 11h2v1h-2zM10 11h2v1h-2z"/></symbol><symbol id="G5bb6"><path fill="currentColor" d="M6 1h1v1h-1zM1 2h11v1h-11zM1 3h1v1h-1zM11 3h1v1h-1zM1 4h1v1h-1zM3 4h7v1h-7zM11 4h1v1h-1zM4 5h1v1h-1zM6 5h1v1h-1zM10 5h1v1h-1zM3 6h1v1h-1zM5 6h1v1h-1zM7 6h1v1h-1zM9 6h1v1h-1zM4 7h1v1h-1zM7 7h2v1h-2zM2 8h2v1h-2zM5 8h3v1h-3zM9 8h1v1h-1zM4 9h1v1h-1zM7 9h1v1h-1zM10 9h1v1h-1zM2 10h2v1h-2zM7 10h1v1h-1zM11 10h1v1h-1zM5 11h2v1h-2z"/></symbol><symbol id="G56ed"><path fill="currentColor" d="M2 1h10v1h-10zM2 2h1v1h-1zM11 2h1v1h-1zM2 3h1v1h-1zM4 3h5v1h-5zM11 3h1v1h-1zM2 4h1v1h-1zM11 4h1v1h-1zM2 5h8v1h-8zM11 5h1v1h-1zM2 6h1v1h-1zM5 6h1v1h-1zM7 6h1v1h-1zM11 6h1v1h-1zM2 7h1v1h-1zM5 7h1v1h-1zM7 7h1v1h-1zM9 7h1v1h-1zM11 7h1v1h-1zM2 8h1v1h-1zM4 8h1v1h-1zM7 8h1v1h-1zM9 8h1v1h-1zM11 8h1v1h-1zM2 9h2v1h-2zM8 9h2v1h-2zM11 9h1v1h-1zM2 10h1v1h-1zM11 10h1v1h-1zM2 11h10v1h-10z"/></symbol><symbol id="G672a"><path fill="currentColor" d="M6 1h1v1h-1zM6 2h1v1h-1zM2 3h9v1h-9zM6 4h1v1h-1zM1 5h11v1h-11zM6 6h1v1h-1zM5 7h3v1h-3zM4 8h1v1h-1zM6 8h1v1h-1zM8 8h1v1h-1zM3 9h1v1h-1zM6 9h1v1h-1zM9 9h1v1h-1zM1 10h2v1h-2zM6 10h1v1h-1zM10 10h2v1h-2zM6 11h1v1h-1z"/></symbol><symbol id="G547d"><path fill="currentColor" d="M6 1h1v1h-1zM5 2h1v1h-1zM7 2h1v1h-1zM4 3h1v1h-1zM8 3h1v1h-1zM1 4h3v1h-3zM5 4h3v1h-3zM9 4h3v1h-3zM2 6h4v1h-4zM7 6h4v1h-4zM2 7h1v1h-1zM5 7h1v1h-1zM7 7h1v1h-1zM10 7h1v1h-1zM2 8h1v1h-1zM5 8h1v1h-1zM7 8h1v1h-1zM10 8h1v1h-1zM2 9h4v1h-4zM7 9h1v1h-1zM10 9h1v1h-1zM2 10h1v1h-1zM5 10h1v1h-1zM7 10h1v1h-1zM9 10h2v1h-2zM7 11h1v1h-1z"/></symbol><symbol id="G540d"><path fill="currentColor" d="M4 1h1v1h-1zM4 2h7v1h-7zM4 3h1v1h-1zM9 3h1v1h-1zM3 4h1v1h-1zM5 4h1v1h-1zM8 4h1v1h-1zM2 5h1v1h-1zM6 5h2v1h-2zM6 6h1v1h-1zM4 7h7v1h-7zM1 8h4v1h-4zM10 8h1v1h-1zM4 9h1v1h-1zM10 9h1v1h-1zM4 10h1v1h-1zM10 10h1v1h-1zM4 11h7v1h-7z"/></symbol><symbol id="G753b"><path fill="currentColor" d="M1 1h11v1h-11zM3 3h7v1h-7zM1 4h1v1h-1zM3 4h1v1h-1zM6 4h1v1h-1zM9 4h1v1h-1zM11 4h1v1h-1zM1 5h1v1h-1zM3 5h1v1h-1zM6 5h1v1h-1zM9 5h1v1h-1zM11 5h1v1h-1zM1 6h1v1h-1zM3 6h7v1h-7zM11 6h1v1h-1zM1 7h1v1h-1zM3 7h1v1h-1zM6 7h1v1h-1zM9 7h1v1h-1zM11 7h1v1h-1zM1 8h1v1h-1zM3 8h1v1h-1zM6 8h1v1h-1zM9 8h1v1h-1zM11 8h1v1h-1zM1 9h1v1h-1zM3 9h7v1h-7zM11 9h1v1h-1zM1 10h1v1h-1zM11 10h1v1h-1zM1 11h11v1h-11z"/></symbol><symbol id="B751f"><path fill="currentColor" d="M8 1h2v1h-2zM4 2h2v1h-2zM8 2h2v1h-2zM4 3h2v1h-2zM8 3h2v1h-2zM4 4h2v1h-2zM8 4h2v1h-2zM3 5h13v1h-13zM3 6h2v1h-2zM8 6h2v1h-2zM2 7h2v1h-2zM8 7h2v1h-2zM1 8h2v1h-2zM8 8h2v1h-2zM8 9h2v1h-2zM3 10h12v1h-12zM8 11h2v1h-2zM8 12h2v1h-2zM8 13h2v1h-2zM8 14h2v1h-2zM1 15h16v1h-16z"/></symbol><symbol id="B6210"><path fill="currentColor" d="M10 1h4v1h-4zM10 2h2v1h-2zM13 2h2v1h-2zM10 3h2v1h-2zM3 4h14v1h-14zM3 5h2v1h-2zM10 5h2v1h-2zM3 6h2v1h-2zM10 6h2v1h-2zM3 7h2v1h-2zM10 7h2v1h-2zM14 7h2v1h-2zM3 8h6v1h-6zM10 8h2v1h-2zM14 8h2v1h-2zM3 9h2v1h-2zM7 9h2v1h-2zM10 9h2v1h-2zM14 9h2v1h-2zM3 10h2v1h-2zM7 10h2v1h-2zM11 10h4v1h-4zM3 11h2v1h-2zM7 11h2v1h-2zM11 11h4v1h-4zM3 12h2v1h-2zM7 12h2v1h-2zM12 12h2v1h-2zM15 12h2v1h-2zM3 13h6v1h-6zM11 13h3v1h-3zM15 13h2v1h-2zM2 14h2v1h-2zM6 14h2v1h-2zM10 14h2v1h-2zM13 14h4v1h-4zM2 15h2v1h-2zM9 15h2v1h-2zM14 15h3v1h-3zM1 16h2v1h-2zM8 16h2v1h-2zM15 16h2v1h-2z"/></symbol></defs></svg>

<!-- Title bar -->
<div class="a" style="left:0;top:0;width:1024px;height:18px;background:linear-gradient(to right,#0a246a,#a6caf0)"></div>
<svg class="a" style="left:1px;top:1px" width="18" height="17" viewBox="0 0 18 17">
<polygon points="9,1 17,8.5 9,16 1,8.5" fill="#a9c3e6"/>
<polygon points="9,1 1,8.5 9,16" fill="#c7dbf3"/>
</svg>
<div class="t" style="left:20px;top:3px;color:#fff;font-weight:bold;font-size:11px">Unity Pro XL</div>
<div class="a raised2" style="left:972px;top:2px;width:16px;height:14px;background:#d4d0c8"></div>
<div class="a" style="left:976px;top:11px;width:6px;height:2px;background:#000"></div>
<div class="a raised2" style="left:988px;top:2px;width:16px;height:14px;background:#d4d0c8"></div>
<div class="a" style="left:994px;top:4px;width:6px;height:6px;border:1px solid #000;border-top-width:2px"></div>
<div class="a" style="left:991px;top:7px;width:6px;height:6px;border:1px solid #000;border-top-width:2px;background:#d4d0c8"></div>
<div class="a raised2" style="left:1006px;top:2px;width:16px;height:14px;background:#d4d0c8"></div>
<svg class="a" style="left:1006px;top:2px" width="16" height="14"><path d="M4.5 3.5 L10.5 9.5 M10.5 3.5 L4.5 9.5" stroke="#000" stroke-width="1.6"/></svg>

<!-- Menu bar -->
<div class="t cn" style="left:5px;top:21px"><svg class="g"><use href="#G6587"/></svg><svg class="g"><use href="#G4ef6"/></svg>(<span class="u">F</span>)</div>
<div class="t cn" style="left:55px;top:21px"><svg class="g"><use href="#G89c6"/></svg><svg class="g"><use href="#G56fe"/></svg>(<span class="u">V</span>)</div>
<div class="t cn" style="left:105px;top:21px"><svg class="g"><use href="#G5de5"/></svg><svg class="g"><use href="#G5177"/></svg>(<span class="u">T</span>)</div>
<div class="a" style="left:150px;top:19px;width:44px;height:18px;background:#0a246a"></div>
<div class="t cn" style="left:155px;top:21px;color:#fff;letter-spacing:-1px">PLC(<span class="u">P</span>)</div>
<div class="t cn" style="left:199px;top:21px"><svg class="g"><use href="#G5e2e"/></svg><svg class="g"><use href="#G52a9"/></svg>(<span class="u">H</span>)</div>

<!-- menu/toolbar separator lines -->
<div class="a" style="left:0;top:38px;width:1024px;height:1px;background:#808080"></div>
<div class="a" style="left:0;top:39px;width:1024px;height:1px;background:#fff"></div>
<div class="a" style="left:0;top:68px;width:1024px;height:1px;background:#808080"></div>
<div class="a" style="left:0;top:69px;width:1024px;height:1px;background:#fff"></div>

<svg id="tbsvg" class="a" style="left:0;top:0" width="1024" height="72"><defs>
<pattern id="dith" width="2" height="2" patternUnits="userSpaceOnUse"><rect width="2" height="2" fill="#d4d0c8"/><rect width="1" height="1" fill="#fff"/><rect x="1" y="1" width="1" height="1" fill="#fff"/></pattern>
<symbol id="new" overflow="visible"><g fill="none" stroke="currentColor"><path d="M3.5 4.5H9.5L12.5 7.5V15.5H3.5Z"/><path d="M5 9.5H11M5 11.5H11M5 13.5H11M9.5 4.5V7.5H12.5"/><path d="M0 1L4 5M0 4L3 3M2 0L3 3" stroke-width="1"/></g></symbol>
<symbol id="open" overflow="visible"><path d="M1 4H6L7 5H12V7H15L12 14H1Z" fill="currentColor"/><path d="M10 2Q12 0 14 3" fill="none" stroke="currentColor"/></symbol>
<symbol id="save" overflow="visible"><path fill="currentColor" fill-rule="evenodd" d="M1 2H15V15H1ZM4 3V8H12V3ZM10 11V14H12V11Z"/></symbol>
<symbol id="print" overflow="visible"><g fill="currentColor"><path d="M5 2H14L13 6H3Z" fill="none" stroke="currentColor"/><path fill-rule="evenodd" d="M1 7H16V14H1ZM2 9V11H13V9Z"/></g></symbol>
<symbol id="copy" overflow="visible"><g fill="none" stroke="currentColor"><path d="M1.5 2.5H6.5L8.5 4.5V10.5H1.5Z"/><path d="M6.5 5.5H11.5L13.5 7.5V14.5H6.5Z"/><path d="M3 5.5H6M3 7.5H6M8 9.5H12M8 11.5H12"/></g></symbol>
<symbol id="part" overflow="visible"><path d="M0 4H4V8H9V14H0Z" fill="currentColor"/><path d="M5 10H8V11H6V13H5Z" fill="#d4d0c8"/></symbol>
<symbol id="stack" overflow="visible"><g fill="none" stroke="currentColor"><path d="M1 8L8 4L15 8L8 12Z"/><path d="M1 10L8 14L15 10M1 12L8 16L15 12"/></g><path d="M7 0H9V4H11L8 7L5 4H7Z" fill="currentColor"/></symbol>
<symbol id="dl" overflow="visible"><g fill="none" stroke="currentColor"><path d="M0.5 5.5V15.5H15.5V5.5M0.5 11.5H15.5"/></g><g fill="currentColor"><path d="M2 13h1v1h-1zM4 13h1v1h-1zM6 13h1v1h-1zM8 13h1v1h-1zM10 13h1v1h-1zM12 13h1v1h-1z"/><path d="M3 5H6V8H8L4.5 11L1 8H3ZM9 5H12V8H14L10.5 11L7 8H9Z"/><path d="M1 1h1v2h-1zM5 1h1v2h-1zM9 1h1v2h-1zM13 1h1v2h-1z"/></g></symbol>
<symbol id="ul" overflow="visible"><g fill="none" stroke="currentColor"><path d="M0.5 8.5V15.5H15.5V8.5M0.5 11.5H15.5M3.5 1V8M7.5 1V8M11.5 1V8"/></g><g fill="currentColor"><path d="M2 13h1v1h-1zM4 13h1v1h-1zM6 13h1v1h-1zM8 13h1v1h-1zM10 13h1v1h-1zM12 13h1v1h-1z"/><path d="M1 9L3.5 6L6 9ZM5 9L7.5 6L10 9ZM9 9L11.5 6L14 9Z"/></g></symbol>
<symbol id="win2" overflow="visible"><g fill="none" stroke="currentColor"><path d="M1.5 1.5H11.5V9.5H1.5Z"/><path d="M3.5 5.5H14.5V14.5H3.5Z"/></g><path d="M1 1H12V3H1ZM3 5H15V7H3Z" fill="currentColor"/><path d="M5 9H13V13H5Z" fill="currentColor"/><path d="M6 10V12M8 10V12M9 10V12M11 10V12" stroke="#d4d0c8"/></symbol>
<symbol id="bino" overflow="visible"><path d="M2 2H6V5H10V2H14V6L15 9V15H10V11H6V15H1V9L2 6Z" fill="currentColor"/></symbol>
<symbol id="grid" overflow="visible"><path fill="currentColor" fill-rule="evenodd" d="M1 2H15V14H1ZM3 5V7H5V5ZM7 5V7H9V5ZM11 5V7H13V5ZM3 8V10H5V8ZM7 8V10H9V8ZM11 8V10H13V8ZM3 11V13H5V11ZM7 11V13H9V11ZM11 11V13H13V11Z"/></symbol>
<symbol id="drawer" overflow="visible"><path d="M1 2L3 0H14V1H15V15H1Z" fill="#000"/><path d="M2 3H4V14H2Z" fill="#b8b880"/><path d="M4 3H13V7H4ZM5 9H15V13H5Z" fill="#fff"/><path d="M4 7H14V8H4Z" fill="#000"/><path d="M8 4H10V5H8ZM9 10H11V11H9Z" fill="#000"/></symbol>
<symbol id="xfer1" overflow="visible"><path d="M1.5 1.5H7.5V4.5H1.5Z" fill="none" stroke="currentColor"/><path d="M4 5H5V6H4ZM0 6H8V9H0ZM1 10H7V11H1Z" fill="currentColor"/><path d="M1 7.5H7" stroke="#d4d0c8"/><path d="M8 8H15V15H8Z" fill="currentColor"/><path d="M10.5 9.5V14M12.5 9.5V14" stroke="#d4d0c8"/><path d="M11 1H12V4H14L11.5 7L9 4H11Z" fill="currentColor"/></symbol>
<symbol id="xfer2" overflow="visible"><path d="M1.5 1.5H7.5V4.5H1.5Z" fill="none" stroke="currentColor"/><path d="M4 5H5V6H4ZM0 6H8V9H0ZM1 10H7V11H1Z" fill="currentColor"/><path d="M1 7.5H7" stroke="#d4d0c8"/><path d="M8 8H15V15H8Z" fill="currentColor"/><path d="M10.5 9.5V14M12.5 9.5V14" stroke="#d4d0c8"/><path d="M11 7H12V4H14L11.5 1L9 4H11Z" fill="currentColor"/></symbol>
<symbol id="rack" overflow="visible"><path fill="currentColor" fill-rule="evenodd" d="M1 2H15V14H1ZM5 3V13H6V3ZM8 3V13H9V3ZM11 3V13H12V3Z"/></symbol>
<symbol id="pc" overflow="visible"><path d="M2 1H14V10H2Z" fill="#000"/><path d="M3.5 2.5H12.5V8.5H3.5Z" fill="#ffffd0"/><path d="M7 10H9V11H7ZM1 11H12L15 15H1Z" fill="#000"/><path d="M3 12H12L13 14H3Z" fill="#a0a040"/></symbol>
<symbol id="run" overflow="visible"><path fill="currentColor" d="M1 1h3v1h-3zM1 2h1v1h-1zM4 2h1v1h-1zM1 3h1v1h-1zM4 3h1v1h-1zM1 4h3v1h-3zM1 5h1v1h-1zM3 5h1v1h-1zM1 6h1v1h-1zM4 6h1v1h-1zM1 7h1v1h-1zM4 7h1v1h-1zM6 1h1v1h-1zM9 1h1v1h-1zM6 2h1v1h-1zM9 2h1v1h-1zM6 3h1v1h-1zM9 3h1v1h-1zM6 4h1v1h-1zM9 4h1v1h-1zM6 5h1v1h-1zM9 5h1v1h-1zM6 6h1v1h-1zM9 6h1v1h-1zM7 7h2v1h-2zM11 1h1v1h-1zM14 1h1v1h-1zM11 2h2v1h-2zM14 2h1v1h-1zM11 3h2v1h-2zM14 3h1v1h-1zM11 4h1v1h-1zM13 4h2v1h-2zM11 5h1v1h-1zM13 5h2v1h-2zM11 6h1v1h-1zM14 6h1v1h-1zM11 7h1v1h-1zM14 7h1v1h-1zM6 9H8V10H9V11H10V12H11V13H10V14H9V15H8V16H6Z"/></symbol>
<symbol id="stop" overflow="visible"><path fill="currentColor" d="M1 1h2v1h-2zM0 2h1v1h-1zM0 3h1v1h-1zM1 4h1v1h-1zM2 5h1v1h-1zM2 6h1v1h-1zM0 7h2v1h-2zM4 1h3v1h-3zM5 2h1v1h-1zM5 3h1v1h-1zM5 4h1v1h-1zM5 5h1v1h-1zM5 6h1v1h-1zM5 7h1v1h-1zM9 1h1v1h-1zM8 2h1v1h-1zM10 2h1v1h-1zM8 3h1v1h-1zM10 3h1v1h-1zM8 4h1v1h-1zM10 4h1v1h-1zM8 5h1v1h-1zM10 5h1v1h-1zM8 6h1v1h-1zM10 6h1v1h-1zM9 7h1v1h-1zM12 1h2v1h-2zM12 2h1v1h-1zM14 2h1v1h-1zM12 3h1v1h-1zM14 3h1v1h-1zM12 4h2v1h-2zM12 5h1v1h-1zM12 6h1v1h-1zM12 7h1v1h-1zM5 10H11V15H5Z"/></symbol>
<symbol id="sync" overflow="visible"><g fill="none" stroke="currentColor" stroke-width="1.2"><path d="M3 11.5A6 6 0 0 1 8.5 2"/><path d="M12.5 3.5A6 6 0 0 1 6.5 14"/><path d="M5 11L10.5 4.5M7.5 12L12 6.5"/></g><path d="M8 0L11 2.5L8 5ZM7.5 11L4.5 13.5L7.5 16Z" fill="currentColor"/></symbol>
<symbol id="rack2" overflow="visible"><path fill="currentColor" fill-rule="evenodd" d="M0 2H15V15H0ZM1 4V14H4V4ZM5 4V14H9V4ZM10 4V14H14V4Z"/><path fill="currentColor" d="M2 6H3V13H2ZM6 6H7V13H6ZM11 6H12V13H11Z"/><path fill="currentColor" d="M1 3H15V4H1Z"/></symbol>
<symbol id="sim" overflow="visible"><g fill="currentColor"><path d="M4 2H10Q11 2 11 3V9H3V3Q3 2 4 2Z"/><path d="M1 9H10V12H1ZM4 12H6V15H4ZM8 12H10V15H8Z"/><path d="M10 10H16V16H10Z"/></g><path d="M2 10.5H9" stroke="#d4d0c8"/><path d="M11 13L12.5 14.5L15 11" stroke="#fff" fill="none"/></symbol>
<symbol id="casc" overflow="visible"><g fill="#d4d0c8" stroke="currentColor"><path d="M1.5 1.5H10.5V7.5H1.5Z"/><path d="M3.5 4.5H12.5V10.5H3.5Z"/><path d="M5.5 8.5H14.5V14.5H5.5Z"/></g><path d="M1 1H11V3H1ZM3 4H13V6H3ZM5 8H15V10H5Z" fill="currentColor"/></symbol>
<symbol id="tileh" overflow="visible"><g fill="none" stroke="currentColor"><path d="M1.5 1.5H14.5V14.5H1.5ZM1.5 7.5H14.5"/></g><path d="M1 1H15V3H1ZM1 8H15V10H1Z" fill="currentColor"/></symbol>
<symbol id="tilev" overflow="visible"><g fill="none" stroke="currentColor"><path d="M1.5 1.5H14.5V14.5H1.5ZM7.5 1.5V14.5M8.5 1.5V14.5"/></g><path d="M1 1H15V3H1Z" fill="currentColor"/></symbol>
<symbol id="help" overflow="visible"><path d="M4.5 5Q4.5 1.5 8 1.5Q11.5 1.5 11.5 5Q11.5 7.5 9 8.5V10" fill="none" stroke="#000" stroke-width="3.6"/><path d="M6.5 11.5H10.5V15.5H6.5Z" fill="#000"/><path d="M4.5 5Q4.5 1.5 8 1.5Q11.5 1.5 11.5 5Q11.5 7.5 9 8.5V10" fill="none" stroke="#ffff40" stroke-width="1.4"/><path d="M7.5 12.5H9.5V14.5H7.5Z" fill="#ffff40"/></symbol>
<symbol id="chelp" overflow="visible"><path d="M0 2V15L3 12L5.5 16L7.5 15L5.5 11H9Z" fill="#000"/><g transform="translate(4,0)"><path d="M4.5 5Q4.5 1.5 8 1.5Q11.5 1.5 11.5 5Q11.5 7.5 9 8.5V10" fill="none" stroke="#000" stroke-width="3.6"/><path d="M6.5 11.5H10.5V15.5H6.5Z" fill="#000"/><path d="M4.5 5Q4.5 1.5 8 1.5Q11.5 1.5 11.5 5Q11.5 7.5 9 8.5V10" fill="none" stroke="#ffff40" stroke-width="1.4"/><path d="M7.5 12.5H9.5V14.5H7.5Z" fill="#ffff40"/></g></symbol>
</defs><rect x="3" y="41" width="3" height="26" fill="#808080"/><rect x="3" y="41" width="2" height="25" fill="#fff"/><rect x="4" y="42" width="1" height="24" fill="#d4d0c8"/><rect x="7" y="41" width="3" height="26" fill="#808080"/><rect x="7" y="41" width="2" height="25" fill="#fff"/><rect x="8" y="42" width="1" height="24" fill="#d4d0c8"/><rect x="109" y="40" width="1" height="28" fill="#808080"/><rect x="110" y="40" width="1" height="28" fill="#fff"/><rect x="114" y="41" width="3" height="26" fill="#808080"/><rect x="114" y="41" width="2" height="25" fill="#fff"/><rect x="115" y="42" width="1" height="24" fill="#d4d0c8"/><rect x="118" y="41" width="3" height="26" fill="#808080"/><rect x="118" y="41" width="2" height="25" fill="#fff"/><rect x="119" y="42" width="1" height="24" fill="#d4d0c8"/><rect x="421" y="40" width="1" height="28" fill="#808080"/><rect x="422" y="40" width="1" height="28" fill="#fff"/><rect x="426" y="41" width="3" height="26" fill="#808080"/><rect x="426" y="41" width="2" height="25" fill="#fff"/><rect x="427" y="42" width="1" height="24" fill="#d4d0c8"/><rect x="430" y="41" width="3" height="26" fill="#808080"/><rect x="430" y="41" width="2" height="25" fill="#fff"/><rect x="431" y="42" width="1" height="24" fill="#d4d0c8"/><rect x="609" y="40" width="1" height="28" fill="#808080"/><rect x="610" y="40" width="1" height="28" fill="#fff"/><rect x="614" y="41" width="3" height="26" fill="#808080"/><rect x="614" y="41" width="2" height="25" fill="#fff"/><rect x="615" y="42" width="1" height="24" fill="#d4d0c8"/><rect x="618" y="41" width="3" height="26" fill="#808080"/><rect x="618" y="41" width="2" height="25" fill="#fff"/><rect x="619" y="42" width="1" height="24" fill="#d4d0c8"/><rect x="859" y="40" width="1" height="28" fill="#808080"/><rect x="860" y="40" width="1" height="28" fill="#fff"/><rect x="864" y="41" width="3" height="26" fill="#808080"/><rect x="864" y="41" width="2" height="25" fill="#fff"/><rect x="865" y="42" width="1" height="24" fill="#d4d0c8"/><rect x="868" y="41" width="3" height="26" fill="#808080"/><rect x="868" y="41" width="2" height="25" fill="#fff"/><rect x="869" y="42" width="1" height="24" fill="#d4d0c8"/><rect x="947" y="40" width="1" height="28" fill="#808080"/><rect x="948" y="40" width="1" height="28" fill="#fff"/><rect x="952" y="41" width="3" height="26" fill="#808080"/><rect x="952" y="41" width="2" height="25" fill="#fff"/><rect x="953" y="42" width="1" height="24" fill="#d4d0c8"/><rect x="956" y="41" width="3" height="26" fill="#808080"/><rect x="956" y="41" width="2" height="25" fill="#fff"/><rect x="957" y="42" width="1" height="24" fill="#d4d0c8"/><rect x="1012" y="40" width="1" height="28" fill="#808080"/><rect x="1013" y="40" width="1" height="28" fill="#fff"/><rect x="507" y="42" width="1" height="24" fill="#808080"/><rect x="508" y="42" width="1" height="24" fill="#fff"/><rect x="672" y="42" width="1" height="24" fill="#808080"/><rect x="673" y="42" width="1" height="24" fill="#fff"/><rect x="726" y="42" width="1" height="24" fill="#808080"/><rect x="727" y="42" width="1" height="24" fill="#fff"/><rect x="803" y="42" width="1" height="24" fill="#808080"/><rect x="804" y="42" width="1" height="24" fill="#fff"/><rect x="830" y="43" width="23" height="22" fill="url(#dith)"/><rect x="830" y="43" width="23" height="1" fill="#808080"/><rect x="830" y="43" width="1" height="22" fill="#808080"/><rect x="830" y="64" width="23" height="1" fill="#fff"/><rect x="852" y="43" width="1" height="22" fill="#fff"/><use href="#new" x="15" y="46" color="#fff"/><use href="#new" x="14" y="45" color="#808080"/><use href="#open" x="38" y="46" color="#fff"/><use href="#open" x="37" y="45" color="#808080"/><use href="#save" x="61" y="46" color="#fff"/><use href="#save" x="60" y="45" color="#808080"/><use href="#print" x="84" y="46" color="#fff"/><use href="#print" x="83" y="45" color="#808080"/><use href="#copy" x="126" y="46" color="#fff"/><use href="#copy" x="125" y="45" color="#808080"/><use href="#part" x="402" y="46" color="#fff"/><use href="#part" x="401" y="45" color="#808080"/><use href="#stack" x="438" y="46" color="#fff"/><use href="#stack" x="437" y="45" color="#808080"/><use href="#dl" x="461" y="46" color="#fff"/><use href="#dl" x="460" y="45" color="#808080"/><use href="#ul" x="484" y="46" color="#fff"/><use href="#ul" x="483" y="45" color="#808080"/><use href="#win2" x="515" y="46" color="#fff"/><use href="#win2" x="514" y="45" color="#808080"/><use href="#bino" x="538" y="46" color="#fff"/><use href="#bino" x="537" y="45" color="#808080"/><use href="#grid" x="561" y="46" color="#fff"/><use href="#grid" x="560" y="45" color="#808080"/><use href="#drawer" x="583" y="45"/><use href="#xfer1" x="626" y="46" color="#fff"/><use href="#xfer1" x="625" y="45" color="#808080"/><use href="#xfer2" x="649" y="46" color="#fff"/><use href="#xfer2" x="648" y="45" color="#808080"/><use href="#rack" x="680" y="46" color="#fff"/><use href="#rack" x="679" y="45" color="#808080"/><use href="#pc" x="702" y="45"/><use href="#run" x="734" y="46" color="#fff"/><use href="#run" x="733" y="45" color="#808080"/><use href="#stop" x="757" y="46" color="#fff"/><use href="#stop" x="756" y="45" color="#808080"/><use href="#sync" x="780" y="46" color="#fff"/><use href="#sync" x="779" y="45" color="#808080"/><use href="#rack2" x="811" y="46" color="#fff"/><use href="#rack2" x="810" y="45" color="#808080"/><use href="#sim" x="834" y="46" color="#fff"/><use href="#sim" x="833" y="45" color="#808080"/><use href="#casc" x="876" y="46" color="#fff"/><use href="#casc" x="875" y="45" color="#808080"/><use href="#tileh" x="899" y="46" color="#fff"/><use href="#tileh" x="898" y="45" color="#808080"/><use href="#tilev" x="922" y="46" color="#fff"/><use href="#tilev" x="921" y="45" color="#808080"/><use href="#help" x="963" y="45"/><use href="#chelp" x="986" y="45"/></svg>

<!-- MDI frame -->
<div class="a raised" style="left:8px;top:76px;width:1009px;height:527px;box-shadow:none;border-right-color:#000;border-bottom-color:#000"></div>
<div class="a sunk2" style="left:13px;top:82px;width:998px;height:515px;background:#808080"></div>

<!-- output panel -->
<div class="a" style="left:0;top:628px;width:1024px;height:1px;background:#808080"></div>
<div class="a" style="left:0;top:629px;width:1024px;height:1px;background:#fff"></div>
<div class="a" style="left:0;top:634px;width:1024px;height:1px;background:#000"></div>
<div class="a sunk2" style="left:18px;top:638px;width:1003px;height:74px;background:#fff"></div>
<div class="a" style="left:20px;top:694px;width:999px;height:1px;background:#000"></div>
<div class="a" style="left:20px;top:695px;width:999px;height:15px;background:#d4d0c8"></div>

<!-- status bar -->
<div class="a" style="left:0;top:715px;width:1024px;height:1px;background:#808080"></div>
<div class="a" style="left:0;top:716px;width:1024px;height:1px;background:#fff"></div>


<!-- PLC dropdown menu -->
<div class="a" style="left:150px;top:37px;width:254px;height:232px;background:#d4d0c8;border:1px solid #808080;border-top:none"></div>
<div class="a" style="left:194px;top:37px;width:210px;height:1px;background:#808080"></div>
<div class="t cn" style="left:175px;top:43px"><svg class="g"><use href="#G65ad"/></svg><svg class="g"><use href="#G5f00"/></svg>(<span class="u">E</span>)</div>
<div class="t" style="right:646px;top:44px">Ctrl+K</div>
<div class="t cn dis" style="left:175px;top:62px"><svg class="g"><use href="#G8bbe"/></svg><svg class="g"><use href="#G7f6e"/></svg><svg class="g"><use href="#G5730"/></svg><svg class="g"><use href="#G5740"/></svg>(<span class="u">A</span>)...</div>
<div class="hsep" style="left:154px;top:81px;width:246px"></div>
<div class="t cn dis" style="left:175px;top:90px"><svg class="g"><use href="#G6807"/></svg><svg class="g"><use href="#G51c6"/></svg><svg class="g"><use href="#G6a21"/></svg><svg class="g"><use href="#G5f0f"/></svg></div>
<div class="t cn dis" style="left:175px;top:109px"><svg class="g"><use href="#G4eff"/></svg><svg class="g"><use href="#G771f"/></svg><svg class="g"><use href="#G6a21"/></svg><svg class="g"><use href="#G5f0f"/></svg></div>
<div class="hsep" style="left:154px;top:128px;width:246px"></div>
<div class="t cn dis" style="left:175px;top:137px"><svg class="g"><use href="#G4ece"/></svg> PLC <svg class="g"><use href="#G4e2d"/></svg><svg class="g"><use href="#G4e0a"/></svg><svg class="g"><use href="#G4f20"/></svg><svg class="g"><use href="#G9879"/></svg><svg class="g"><use href="#G76ee"/></svg>(<span class="u">R</span>)</div>
<div class="t dis" style="right:646px;top:138px">Ctrl+Shift+L</div>
<div class="t cn dis" style="left:175px;top:156px"><svg class="g"><use href="#G5c06"/></svg><svg class="g"><use href="#G6570"/></svg><svg class="g"><use href="#G636e"/></svg><svg class="g"><use href="#G4ece"/></svg> PLC <svg class="g"><use href="#G4f20"/></svg><svg class="g"><use href="#G8f93"/></svg><svg class="g"><use href="#G5230"/></svg><svg class="g"><use href="#G6587"/></svg><svg class="g"><use href="#G4ef6"/></svg>(<span class="u">F</span>)</div>
<div class="hsep" style="left:154px;top:175px;width:246px"></div>
<div class="t cn dis" style="left:175px;top:184px"><svg class="g"><use href="#G5b89"/></svg><svg class="g"><use href="#G5168"/></svg>/<svg class="g"><use href="#G7ef4"/></svg><svg class="g"><use href="#G62a4"/></svg></div>
<div class="t dis" style="right:646px;top:185px">Ctrl+Shift+M</div>
<div class="t cn dis" style="left:175px;top:203px"><svg class="g"><use href="#G8fd0"/></svg><svg class="g"><use href="#G884c"/></svg>/<svg class="g"><use href="#G505c"/></svg><svg class="g"><use href="#G6b62"/></svg>(<span class="u">S</span>)</div>
<div class="t dis" style="right:646px;top:204px">Ctrl+R</div>
<div class="t cn dis" style="left:175px;top:222px"><svg class="g"><use href="#G521d"/></svg><svg class="g"><use href="#G59cb"/></svg><svg class="g"><use href="#G5316"/></svg>(<span class="u">I</span>)</div>
<div class="hsep" style="left:154px;top:241px;width:246px"></div>
<div class="t cn" style="left:175px;top:250px"><svg class="g"><use href="#G9879"/></svg><svg class="g"><use href="#G76ee"/></svg><svg class="g"><use href="#G5907"/></svg><svg class="g"><use href="#G4efd"/></svg>(<span class="u">B</span>)...</div>
<svg class="a" style="left:390px;top:252px" width="5" height="8"><polygon points="0,0 4,3.5 0,7" fill="#000"/></svg>


<!-- menu icons -->
<svg class="a" style="left:150px;top:84px" width="30" height="72" viewBox="150 84 30 72">
<use href="#rack2" x="157" y="88" color="#fff"/><use href="#rack2" x="156" y="87" color="#808080"/>
<rect x="154.5" y="105.5" width="18" height="18" fill="none" stroke="#808080"/>
<path d="M173 106V124H154" fill="none" stroke="#fff"/>
<use href="#sim" x="156" y="107" color="#808080"/>
<use href="#xfer2" x="157" y="137" color="#fff"/><use href="#xfer2" x="156" y="136" color="#808080"/>
</svg>

<!-- hand drawn annotation -->
<svg class="a" style="left:0;top:0" width="1024" height="300">
<g fill="none" stroke="#000" stroke-width="1" stroke-linejoin="round" shape-rendering="crispEdges">
<path d="M165.6 124.6L169.5 122.7L196.9 122.7L224.2 125.6L257.4 128.6L271 130.5L286.7 133.4L298.4 139.3L314 148L321.9 152L327.7 156.9L329.7 162.7L326.8 168.6L319.9 174.5L312.1 177.4L290.6 176.4L265.2 173.5L234 168.6L208.6 166.6L193 165.7L175.4 168.6L167.6 160.8L165.6 149Z"/>
<path d="M329.5 166.5L342.2 171.1L368 173.3L385.2 173.5L500.5 173.5"/>
<path d="M500.5 166L500.5 177.6"/>
<path d="M500.5 175.4L500.5 162.5L504 153.1L513.4 144.9L525.2 137.9L532.2 134.8L546.2 133.7L576.7 133.7L602.5 140.9L621.2 143.7L640 152L661 159L677.5 168.4L691.5 178.9L705.6 191.8L715 203.5L718.5 216.4L718.5 234L712.6 241L701 242.6L651.7 242.6L614.2 237L579 225.8L551 218.7L540.4 214L536.9 207L525.2 193L513.4 182.4L502.9 176.6"/>
</g>
</svg>
<div class="a" style="left:547px;top:161px;width:30px;height:37px;background:#fff"></div>
<div class="t cn" style="left:546px;top:160px;line-height:12px"><svg class="g"><use href="#G4e0d"/></svg><svg class="g"><use href="#G80fd"/></svg><br><svg class="g"><use href="#G64cd"/></svg><svg class="g"><use href="#G4f5c"/></svg></div>

<!-- output panel left controls -->
<div class="a raised2" style="left:5px;top:640px;width:11px;height:11px;background:#d4d0c8"></div>
<svg class="a" style="left:5px;top:640px" width="11" height="11"><path d="M3 3L8 8M8 3L3 8" stroke="#000" stroke-width="1.5"/></svg>
<div class="a raised2" style="left:5px;top:652px;width:11px;height:12px;background:#d4d0c8"></div>
<svg class="a" style="left:5px;top:652px" width="11" height="12"><path d="M4 3L7 6L4 9Z" fill="#808080"/></svg>
<div class="grip" style="left:7px;top:666px;height:44px"></div>
<div class="grip" style="left:11px;top:666px;height:44px"></div>

<!-- tab strip -->
<svg class="a" style="left:0;top:690px" width="1024" height="22" viewBox="0 690 1024 22">
<g stroke="#000" stroke-width="1">
<rect x="20.5" y="695.5" width="16" height="14" fill="#d4d0c8" stroke="none"/>
</g>
<g>
<path d="M20 695h17v15h-17z M37 695h17v15h-17z M54 695h17v15h-17z M71 695h17v15h-17z" fill="#d4d0c8"/>
<path d="M20.5 708V695.5H36M37.5 708V695.5H53M54.5 708V695.5H70M71.5 708V695.5H87" fill="none" stroke="#fff"/>
<path d="M21 708.5H35.5V695M38 708.5H52.5V695M55 708.5H69.5V695M72 708.5H86.5V695" fill="none" stroke="#808080"/>
<path d="M20 709.5H36.5V695M37 709.5H53.5V695M54 709.5H70.5V695M71 709.5H87.5V695" fill="none" stroke="#000"/>
<path d="M24 697h1v10h-1z M32 697V707L26 702Z M47 697V707L41 702Z M59 697V707L65 702Z M74 697V707L80 702Z M81 697h1v10h-1z" fill="#808080"/>
</g>
<g stroke="#000" stroke-width="1.2" stroke-linejoin="round">
<path d="M137 694.5L143.5 708.5H227L233 694.5" fill="#d4d0c8"/>
<path d="M230 694.5L236 708.5H310L316 694.5" fill="#d4d0c8"/>
<path d="M313 694.5L319 708.5H402L408 694.5" fill="#d4d0c8"/>
<path d="M87 694L94 708.5H134L141 694Z" fill="#fff" stroke="none"/><path d="M87 694.5L94 708.5H134L141 694.5" fill="none"/>
</g>
</svg>
<div class="t" style="left:97px;top:693px;font-size:16px;line-height:16px;font-weight:bold"><span class="big"><svg class="gb"><use href="#B751f"/></svg><svg class="gb"><use href="#B6210"/></svg></span></div>
<div class="t cn" style="left:158px;top:696px"><svg class="g"><use href="#G5bfc"/></svg><svg class="g"><use href="#G5165"/></svg>/<svg class="g"><use href="#G5bfc"/></svg><svg class="g"><use href="#G51fa"/></svg></div>
<div class="t cn" style="left:249px;top:696px"><svg class="g"><use href="#G7528"/></svg><svg class="g"><use href="#G6237"/></svg><svg class="g"><use href="#G9519"/></svg><svg class="g"><use href="#G8bef"/></svg></div>
<div class="t cn" style="left:332px;top:696px"><svg class="g"><use href="#G641c"/></svg><svg class="g"><use href="#G7d22"/></svg>/<svg class="g"><use href="#G66ff"/></svg><svg class="g"><use href="#G6362"/></svg></div>

<!-- status bar panels -->
<div class="a sunk1" style="left:350px;top:719px;width:76px;height:19px"></div>
<div class="t cn" style="left:352px;top:722px">HMI <svg class="g"><use href="#G8bfb"/></svg><svg class="g"><use href="#G5199"/></svg><svg class="g"><use href="#G6a21"/></svg><svg class="g"><use href="#G5f0f"/></svg></div>
<div class="a sunk1" style="left:428px;top:719px;width:31px;height:19px"></div>
<div class="a sunk1" style="left:460px;top:719px;width:9px;height:19px"></div>
<div class="a sunk1" style="left:471px;top:719px;width:42px;height:19px"></div>
<div class="t cn" style="left:473px;top:722px"><svg class="g"><use href="#G65e0"/></svg><svg class="g"><use href="#G914d"/></svg><svg class="g"><use href="#G7f6e"/></svg></div>
<div class="a sunk1" style="left:515px;top:719px;width:66px;height:19px"></div>
<div class="t cn" style="left:517px;top:722px"><svg class="g"><use href="#G65e0"/></svg><svg class="g"><use href="#G4e0a"/></svg><svg class="g"><use href="#G8f7d"/></svg><svg class="g"><use href="#G4fe1"/></svg><svg class="g"><use href="#G606f"/></svg></div>
<div class="a sunk1" style="left:583px;top:719px;width:86px;height:19px"></div>
<div class="t" style="left:585px;top:723px">TCPIP:127.0.0.1</div>
<div class="a sunk1" style="left:671px;top:719px;width:13px;height:19px"></div>
<div class="a sunk1" style="left:686px;top:719px;width:71px;height:19px"></div>
<div class="a sunk1" style="left:760px;top:719px;width:96px;height:19px"></div>
<div class="a sunk1" style="left:858px;top:719px;width:43px;height:19px"></div>
<div class="a sunk1" style="left:903px;top:719px;width:12px;height:19px"></div>
<div class="a" style="left:919px;top:717px;width:102px;height:21px;background:linear-gradient(#6f8fc8,#2e5bb0 45%,#1d4aa0);border:1px solid #0b2a66"></div>
<svg class="a" style="left:919px;top:717px" width="102" height="21">
<rect x="2" y="2" width="17" height="17" fill="#fff"/>
<path d="M15.5 6Q14 3.5 10.5 3.5Q5 3.5 5 7Q5 9.5 10 10.5Q14.5 11.5 14.5 13.5Q14.5 16.5 10 16.5Q6 16.5 4.5 14" fill="none" stroke="#e8401a" stroke-width="3.4"/>
<path d="M22.5 6.5H33.5V13.5H22.5Z M28 3V18" fill="none" stroke="#d8f4ff" stroke-width="2.6"/>
<path d="M49 4Q53 9 49 14Q45 17 41 14Q45 13 47 10Q48.5 7 49 4Z" fill="#d8f4ff"/>
<circle cx="58" cy="10" r="1.7" fill="none" stroke="#d8f4ff"/><path d="M63 11V15L61.5 17" stroke="#d8f4ff" stroke-width="1.5" fill="none"/>
<path d="M67.5 5.5H80.5V14.5H67.5ZM70 8H78M70 10.5H76M77 10.5H78" fill="none" stroke="#d8f4ff" stroke-width="1.2"/>
<path d="M85 16L91 10" stroke="#d8f4ff" stroke-width="2.8"/><path d="M89 9A4 4 0 1 0 95 4L92.5 6.5L90.5 5.5L92 3A4 4 0 0 0 89 9Z" fill="#d8f4ff"/>
</svg>

<!-- taskbar -->
<div class="a" style="left:0;top:739px;width:1024px;height:1px;background:#fff"></div>



<!-- start button -->
<div class="a raised" style="left:2px;top:742px;width:47px;height:22px;background:#d4d0c8"></div>
<svg class="a" style="left:4px;top:745px" width="17" height="16">
<path d="M1.5 3.5Q4 2 8 3L7 8Q4 7 1 8.5Z" fill="#f06428"/>
<path d="M9 3Q12 4 15.5 3L14.5 8.5Q11 9.5 8 8.5Z" fill="#7cc434"/>
<path d="M1 9.5Q4 8.5 7 9.5L6 14.5Q3 13.5 0 15Z" fill="#4a7ee8"/>
<path d="M8 9.5Q11 10.5 14 9.5L13 15Q10 16 7 15Z" fill="#f8d020"/>
</svg>
<div class="t cn" style="left:21px;top:746px"><svg class="g"><use href="#G5f00"/></svg><svg class="g"><use href="#G59cb"/></svg></div>

<!-- quick launch -->
<svg class="a" style="left:56px;top:745px" width="17" height="17">
<rect x="0.5" y="1" width="15" height="15" rx="3" fill="#27457e"/>
<rect x="2" y="2.5" width="12" height="12" rx="2" fill="#9ccbf0"/>
<path d="M11.5 4.5H5V12.5H11.5" fill="none" stroke="#eaf8ff" stroke-width="2.2"/>
<path d="M7 6.5H10M7 8.5H11M7 10.5H10" stroke="#3a6ab0" stroke-width="1"/>
<path d="M8 9L13 4" stroke="#000" stroke-width="1.4"/>
</svg>
<div class="t cn" style="left:83px;top:747px"><svg class="g"><use href="#G7f51"/></svg><svg class="g"><use href="#G7edc"/></svg></div>
<svg class="a" style="left:113px;top:751px" width="9" height="6"><path d="M0 0H8L4 5Z" fill="#000"/></svg>
<div class="t cn" style="left:130px;top:747px"><svg class="g"><use href="#G5de5"/></svg><svg class="g"><use href="#G5177"/></svg></div>
<svg class="a" style="left:160px;top:751px" width="9" height="6"><path d="M0 0H8L4 5Z" fill="#000"/></svg>
<svg class="a" style="left:174px;top:746px" width="17" height="17">
<ellipse cx="8.5" cy="8.5" rx="7.2" ry="6.8" fill="#2e8ad8"/>
<path d="M2 11Q3 15 8 15.5Q13 15.5 15 10" fill="none" stroke="#123e78" stroke-width="1.6"/>
<path d="M5 8.5H12.5Q12.5 5 8.5 5Q4.8 5 4.8 8.8Q4.8 12.5 8.5 12.5Q11 12.5 12 11" fill="none" stroke="#0e3a70" stroke-width="1.8"/>
<path d="M7 6.5H10M7 10.5H10" stroke="#90e8ff" stroke-width="1.2"/>
</svg>
<svg class="a" style="left:196px;top:748px" width="10" height="8"><path d="M1 1L4 3.5L1 6M5 1L8 3.5L5 6" fill="none" stroke="#000" stroke-width="1.6"/></svg>

<!-- task buttons -->
<div class="a raised" style="left:214px;top:742px;width:160px;height:22px;background:#d4d0c8"></div>
<svg class="a" style="left:219px;top:746px" width="16" height="16">
<circle cx="8" cy="8" r="7" fill="#2aa040"/>
<path d="M1.5 10Q2 15 8 15Q13 15 14.5 10" fill="none" stroke="#0e6a20" stroke-width="1.4"/>
<path d="M4 7.5H12Q12 4 8 4Q4.3 4 4.3 8Q4.3 12 8 12Q10.5 12 11.5 10.5" fill="none" stroke="#e0ffe0" stroke-width="1.8"/>
</svg>
<div class="t cn" style="left:238px;top:746px"><svg class="g"><use href="#G7efc"/></svg><svg class="g"><use href="#G5408"/></svg><svg class="g"><use href="#G8ba8"/></svg><svg class="g"><use href="#G8bba"/></svg> - <svg class="g"><use href="#G5de5"/></svg><svg class="g"><use href="#G63a7"/></svg><svg class="g"><use href="#G4eba"/></svg><svg class="g"><use href="#G5bb6"/></svg><svg class="g"><use href="#G56ed"/></svg>...</div>

<div class="a" style="left:377px;top:742px;width:160px;height:22px;background-color:#fff;background-image:linear-gradient(45deg,#d4d0c8 25%,transparent 25%,transparent 75%,#d4d0c8 75%),linear-gradient(45deg,#d4d0c8 25%,transparent 25%,transparent 75%,#d4d0c8 75%);background-size:2px 2px;background-position:0 0,1px 1px;border-top:1px solid #404040;border-left:1px solid #404040;border-right:1px solid #fff;border-bottom:1px solid #fff;box-shadow:inset 1px 1px 0 #808080"></div>
<svg class="a" style="left:382px;top:746px" width="17" height="16">
<polygon points="8.5,0.5 16,8 8.5,15.5 1,8" fill="#8fb2e2"/>
<polygon points="8.5,0.5 16,8 8.5,15.5" fill="#b5d0f2"/>
</svg>
<div class="t" style="left:401px;top:748px">Unity Pro XL</div>

<div class="a raised" style="left:540px;top:742px;width:160px;height:22px;background:#d4d0c8"></div>
<svg class="a" style="left:545px;top:745px" width="15" height="17">
<path d="M2 2Q7 0 13 2L11 15Q7 16.5 4 15Z" fill="#c0a878"/>
<path d="M4 3L6 13M7 2.5L8 13M10 3L9 13" stroke="#3090e0" stroke-width="1.3"/>
<path d="M5 4L7 12" stroke="#e04020" stroke-width="1.2"/>
<path d="M9 3L10 12" stroke="#40c060" stroke-width="1.2"/>
</svg>
<div class="t cn" style="left:564px;top:746px"><svg class="g"><use href="#G672a"/></svg><svg class="g"><use href="#G547d"/></svg><svg class="g"><use href="#G540d"/></svg> - <svg class="g"><use href="#G753b"/></svg><svg class="g"><use href="#G56fe"/></svg></div>

<!-- sogou / help / langbar -->
<svg class="a" style="left:819px;top:745px" width="19" height="18">
<rect x="1.5" y="1.5" width="16" height="16" fill="#fff2d8" stroke="#e08050"/>
<path d="M14 5.5Q12.5 3.5 9.5 3.5Q5 3.5 5 6.5Q5 9 9.5 9.5Q14 10.5 14 13Q14 15.5 9.5 15.5Q6 15.5 4.5 13.5" fill="none" stroke="#e03a1a" stroke-width="2.6"/>
</svg>
<div class="sep" style="left:840px;top:744px;height:20px"></div>
<svg class="a" style="left:848px;top:746px" width="16" height="17">
<path d="M1.5 1.5H13.5V12.5H9L7 15V12.5H1.5Z" fill="#ffffe0" stroke="#000" stroke-width="1.4"/>
<path d="M5 5Q5 3 7.5 3Q10 3 10 5Q10 6.5 7.5 7.5V8.5" fill="none" stroke="#000" stroke-width="1.4"/>
<rect x="6.8" y="9.6" width="1.6" height="1.6" fill="#000"/>
</svg>
<div class="sep" style="left:867px;top:744px;height:20px"></div>
<svg class="a" style="left:873px;top:744px" width="12" height="18">
<path d="M4.5 3.5H10.5V6.5H4.5ZM1.5 6.5H7.5V9.5H1.5Z" fill="#fff" stroke="#000"/>
<path d="M3 13H9L6 16Z" fill="#000"/>
</svg>

<!-- tray -->
<div class="a sunk1" style="left:891px;top:742px;width:131px;height:24px"></div>
<svg class="a" style="left:891px;top:742px" width="131" height="24">
<path d="M9 8L5.5 11.5L9 15M13 8L9.5 11.5L13 15" fill="none" stroke="#000" stroke-width="1.6"/>
<rect x="17" y="4" width="17" height="16" fill="#16e616"/>
<path d="M21.5 8Q21.5 5 25 5Q29 5 29 8Q29 10.5 25.5 12V14" fill="none" stroke="#c83010" stroke-width="2"/>
<rect x="24.3" y="15.5" width="2.4" height="2.4" fill="#c83010"/>
<rect x="37" y="8" width="10" height="8" fill="#203a80"/><rect x="37" y="16" width="10" height="3" fill="#a0a8c8"/>
<path d="M48 6Q50 9 48 12M50.5 4Q53.5 9 50.5 14" fill="none" stroke="#303050"/>
<path d="M55.5 5L62 3L68.5 5V11Q68 16 62 19Q56 16 55.5 11Z" fill="#2a9a2a" stroke="#1a6a1a"/>
<path d="M63.5 6L58.5 12H62L60 17L66 10H62.5Z" fill="#e8ffe0"/>
<circle cx="79" cy="12" r="7" fill="#707070"/><circle cx="78" cy="11" r="4" fill="#b0b0b0"/><circle cx="78" cy="11" r="2" fill="#505050"/>
<path d="M82 18Q87 16 88 11" fill="none" stroke="#9090c0"/>
</svg>
<div class="t" style="left:985px;top:749px;font-size:12px">14:20</div>

</body></html>
